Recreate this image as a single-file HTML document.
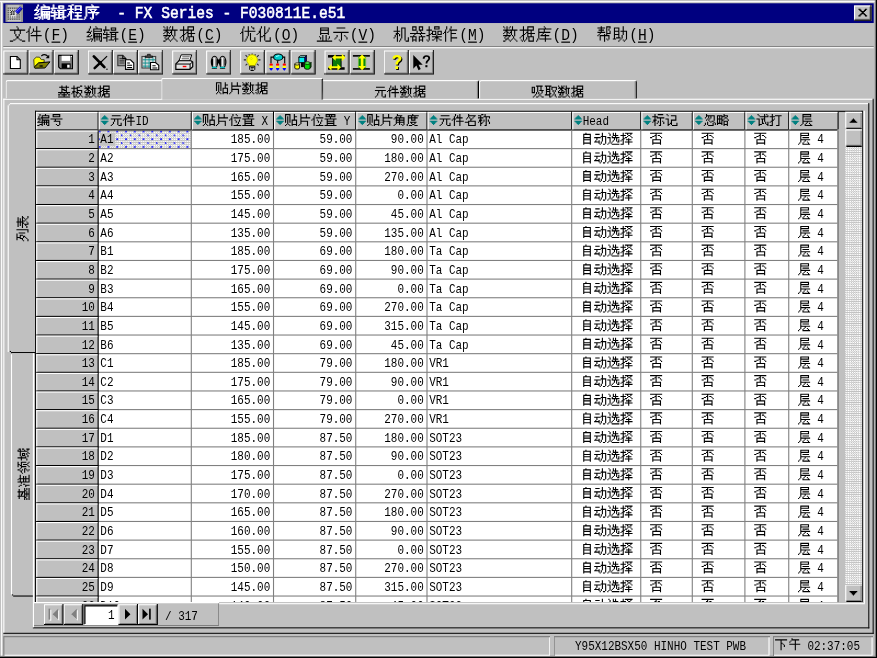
<!DOCTYPE html>
<html lang="zh"><head><meta charset="utf-8"><title>编辑程序 - FX Series - F030811E.e51</title>
<style>
html,body{margin:0;padding:0;background:#c0c0c0;overflow:hidden}
body{width:877px;height:658px;position:relative}
#stage{will-change:transform;position:absolute;left:0;top:0;width:800px;height:600px;transform:scale(1.096250,1.096667);transform-origin:0 0;overflow:hidden;
 font-family:"Liberation Mono",monospace;color:#000}
#stage div,#stage span,#stage svg{position:absolute;box-sizing:border-box}
#stage svg{overflow:visible}
.t12,.t15{white-space:pre;line-height:1;transform-origin:0 0;display:block}
.t12{font-size:10px;transform:translate(-0.5px,1.4px) scaleY(1.2)}
.t15{font-size:13.3333px;transform:translateY(1.8px) scaleY(1.1)}
.b{font-weight:normal;-webkit-text-stroke:0.45px currentColor}
.cj{display:block;width:0;height:0}
.cj svg{left:0;top:0}
.sr{width:1px;height:1px;overflow:hidden;clip:rect(0 0 0 0);clip-path:inset(50%);white-space:nowrap;font-size:1px;color:transparent}
u{text-decoration:underline;text-underline-offset:1px}
.tbb{background:#c0c0c0;box-shadow:inset -1px -1px 0 #202020,inset 1px 1px 0 #fff,inset -2px -2px 0 #808080}
.sbtn{background:#c0c0c0;box-shadow:inset 1px 1px 0 #fff,inset 0 -1px 0 #000,inset -1px -2px 0 #808080}
.nbtn{background:#c0c0c0;box-shadow:inset -1px -1px 0 #000,inset 1px 1px 0 #fff,inset -2px -2px 0 #808080}
.tab{background:#c0c0c0;border-top:1px solid #fff;border-left:1px solid #fff;border-right:1px solid #000;border-radius:2px 2px 0 0;box-shadow:inset -1px 0 0 #808080}
.tab.sel{}
.selcell{background-color:#c0c0c0;background-image:radial-gradient(circle at 1px 1px,#2828ff 0.7px,transparent 1px),radial-gradient(circle at 5px 4.5px,#2828ff 0.7px,transparent 1px),repeating-conic-gradient(#fff 0 25%,#c0c0c0 0 50%);background-size:8px 7px,8px 7px,2px 2px}
</style></head>
<body><div id="stage">
<svg width="0" height="0" style="left:0;top:0"><defs><path id="g157f16" d="M3 0h1v1h-1zM8 0h1v1h-1zM3 1h1v1h-1zM9 1h1v1h-1zM2 2h1v1h-1zM6 2h8v1h-8zM2 3h1v1h-1zM6 3h1v1h-1zM13 3h1v1h-1zM1 4h1v1h-1zM4 4h1v1h-1zM6 4h8v1h-8zM0 5h4v1h-4zM6 5h1v1h-1zM3 6h1v1h-1zM6 6h8v1h-8zM2 7h1v1h-1zM6 7h2v1h-2zM9 7h1v1h-1zM11 7h1v1h-1zM13 7h1v1h-1zM1 8h1v1h-1zM4 8h1v1h-1zM6 8h2v1h-2zM9 8h1v1h-1zM11 8h1v1h-1zM13 8h1v1h-1zM0 9h4v1h-4zM6 9h8v1h-8zM6 10h2v1h-2zM9 10h1v1h-1zM11 10h1v1h-1zM13 10h1v1h-1zM3 11h3v1h-3zM7 11h1v1h-1zM9 11h1v1h-1zM11 11h1v1h-1zM13 11h1v1h-1zM0 12h3v1h-3zM5 12h1v1h-1zM7 12h1v1h-1zM9 12h1v1h-1zM11 12h1v1h-1zM13 12h1v1h-1zM4 13h1v1h-1zM7 13h1v1h-1zM12 13h2v1h-2z"/><path id="g158f91" d="M2 0h1v1h-1zM2 1h1v1h-1zM7 1h5v1h-5zM2 2h1v1h-1zM7 2h1v1h-1zM11 2h1v1h-1zM0 3h6v1h-6zM7 3h5v1h-5zM1 4h1v1h-1zM1 5h1v1h-1zM3 5h1v1h-1zM6 5h8v1h-8zM0 6h1v1h-1zM3 6h1v1h-1zM7 6h1v1h-1zM11 6h1v1h-1zM0 7h6v1h-6zM7 7h5v1h-5zM3 8h1v1h-1zM7 8h1v1h-1zM11 8h1v1h-1zM3 9h3v1h-3zM7 9h5v1h-5zM0 10h4v1h-4zM7 10h1v1h-1zM11 10h1v1h-1zM3 11h1v1h-1zM7 11h1v1h-1zM10 11h4v1h-4zM3 12h1v1h-1zM5 12h5v1h-5zM11 12h1v1h-1zM3 13h1v1h-1zM11 13h1v1h-1z"/><path id="g157a0b" d="M4 0h2v1h-2zM1 1h3v1h-3zM7 1h6v1h-6zM3 2h1v1h-1zM7 2h1v1h-1zM12 2h1v1h-1zM3 3h1v1h-1zM7 3h1v1h-1zM12 3h1v1h-1zM0 4h6v1h-6zM7 4h6v1h-6zM3 5h1v1h-1zM7 5h1v1h-1zM12 5h1v1h-1zM2 6h3v1h-3zM2 7h2v1h-2zM5 7h1v1h-1zM7 7h6v1h-6zM1 8h1v1h-1zM3 8h1v1h-1zM9 8h1v1h-1zM1 9h1v1h-1zM3 9h1v1h-1zM9 9h1v1h-1zM0 10h1v1h-1zM3 10h1v1h-1zM7 10h6v1h-6zM3 11h1v1h-1zM9 11h1v1h-1zM3 12h1v1h-1zM9 12h1v1h-1zM3 13h1v1h-1zM5 13h9v1h-9z"/><path id="g155e8f" d="M7 0h1v1h-1zM8 1h1v1h-1zM2 2h12v1h-12zM2 3h1v1h-1zM2 4h1v1h-1zM4 4h8v1h-8zM2 5h1v1h-1zM6 5h1v1h-1zM10 5h1v1h-1zM2 6h1v1h-1zM7 6h1v1h-1zM9 6h1v1h-1zM2 7h1v1h-1zM4 7h10v1h-10zM2 8h1v1h-1zM8 8h1v1h-1zM12 8h1v1h-1zM2 9h1v1h-1zM8 9h1v1h-1zM11 9h1v1h-1zM2 10h1v1h-1zM8 10h1v1h-1zM1 11h1v1h-1zM8 11h1v1h-1zM1 12h1v1h-1zM6 12h1v1h-1zM8 12h1v1h-1zM0 13h1v1h-1zM7 13h1v1h-1z"/><path id="g156587" d="M6 0h1v1h-1zM7 1h1v1h-1zM7 2h1v1h-1zM0 3h14v1h-14zM4 4h1v1h-1zM9 4h1v1h-1zM4 5h1v1h-1zM9 5h1v1h-1zM4 6h1v1h-1zM9 6h1v1h-1zM5 7h1v1h-1zM8 7h1v1h-1zM5 8h1v1h-1zM8 8h1v1h-1zM6 9h2v1h-2zM6 10h2v1h-2zM5 11h1v1h-1zM8 11h1v1h-1zM3 12h2v1h-2zM9 12h2v1h-2zM0 13h3v1h-3zM11 13h3v1h-3z"/><path id="g154ef6" d="M3 0h1v1h-1zM9 0h1v1h-1zM3 1h1v1h-1zM9 1h1v1h-1zM2 2h1v1h-1zM6 2h1v1h-1zM9 2h1v1h-1zM2 3h1v1h-1zM6 3h1v1h-1zM9 3h1v1h-1zM1 4h2v1h-2zM6 4h7v1h-7zM0 5h1v1h-1zM2 5h1v1h-1zM5 5h1v1h-1zM9 5h1v1h-1zM2 6h1v1h-1zM4 6h1v1h-1zM9 6h1v1h-1zM2 7h1v1h-1zM9 7h1v1h-1zM2 8h1v1h-1zM4 8h10v1h-10zM2 9h1v1h-1zM9 9h1v1h-1zM2 10h1v1h-1zM9 10h1v1h-1zM2 11h1v1h-1zM9 11h1v1h-1zM2 12h1v1h-1zM9 12h1v1h-1zM2 13h1v1h-1zM9 13h1v1h-1z"/><path id="g156570" d="M0 0h1v1h-1zM3 0h1v1h-1zM6 0h1v1h-1zM8 0h1v1h-1zM1 1h1v1h-1zM3 1h1v1h-1zM5 1h1v1h-1zM8 1h1v1h-1zM3 2h1v1h-1zM8 2h1v1h-1zM0 3h13v1h-13zM2 4h2v1h-2zM7 4h1v1h-1zM10 4h1v1h-1zM1 5h1v1h-1zM3 5h2v1h-2zM6 5h2v1h-2zM10 5h1v1h-1zM0 6h1v1h-1zM3 6h1v1h-1zM5 6h1v1h-1zM7 6h1v1h-1zM10 6h1v1h-1zM3 7h1v1h-1zM7 7h1v1h-1zM10 7h1v1h-1zM0 8h7v1h-7zM8 8h1v1h-1zM10 8h1v1h-1zM2 9h1v1h-1zM5 9h1v1h-1zM9 9h1v1h-1zM1 10h1v1h-1zM4 10h1v1h-1zM9 10h1v1h-1zM2 11h3v1h-3zM8 11h1v1h-1zM10 11h1v1h-1zM2 12h1v1h-1zM5 12h1v1h-1zM7 12h1v1h-1zM11 12h1v1h-1zM0 13h2v1h-2zM6 13h1v1h-1zM12 13h1v1h-1z"/><path id="g15636e" d="M3 0h1v1h-1zM7 0h6v1h-6zM3 1h1v1h-1zM7 1h1v1h-1zM12 1h1v1h-1zM3 2h1v1h-1zM7 2h1v1h-1zM12 2h1v1h-1zM0 3h13v1h-13zM3 4h1v1h-1zM7 4h1v1h-1zM10 4h1v1h-1zM3 5h1v1h-1zM6 5h2v1h-2zM10 5h1v1h-1zM3 6h1v1h-1zM5 6h1v1h-1zM7 6h7v1h-7zM3 7h2v1h-2zM7 7h1v1h-1zM10 7h1v1h-1zM2 8h2v1h-2zM7 8h1v1h-1zM10 8h1v1h-1zM1 9h1v1h-1zM3 9h1v1h-1zM7 9h6v1h-6zM0 10h1v1h-1zM3 10h1v1h-1zM6 10h1v1h-1zM8 10h1v1h-1zM12 10h1v1h-1zM3 11h1v1h-1zM6 11h1v1h-1zM8 11h1v1h-1zM12 11h1v1h-1zM1 12h1v1h-1zM3 12h1v1h-1zM5 12h1v1h-1zM8 12h1v1h-1zM12 12h1v1h-1zM2 13h1v1h-1zM4 13h1v1h-1zM8 13h5v1h-5z"/><path id="g154f18" d="M3 0h1v1h-1zM7 0h1v1h-1zM10 0h1v1h-1zM3 1h1v1h-1zM7 1h1v1h-1zM11 1h2v1h-2zM2 2h1v1h-1zM7 2h1v1h-1zM12 2h1v1h-1zM2 3h1v1h-1zM7 3h1v1h-1zM2 4h1v1h-1zM4 4h10v1h-10zM1 5h2v1h-2zM7 5h1v1h-1zM0 6h1v1h-1zM2 6h1v1h-1zM7 6h1v1h-1zM9 6h1v1h-1zM2 7h1v1h-1zM7 7h1v1h-1zM9 7h1v1h-1zM2 8h1v1h-1zM7 8h1v1h-1zM9 8h1v1h-1zM2 9h1v1h-1zM6 9h1v1h-1zM9 9h1v1h-1zM2 10h1v1h-1zM6 10h1v1h-1zM9 10h1v1h-1zM13 10h1v1h-1zM2 11h1v1h-1zM5 11h1v1h-1zM9 11h1v1h-1zM13 11h1v1h-1zM2 12h1v1h-1zM5 12h1v1h-1zM9 12h1v1h-1zM13 12h1v1h-1zM2 13h1v1h-1zM4 13h1v1h-1zM10 13h4v1h-4z"/><path id="g155316" d="M4 0h1v1h-1zM7 0h1v1h-1zM4 1h1v1h-1zM7 1h1v1h-1zM11 1h1v1h-1zM3 2h1v1h-1zM7 2h1v1h-1zM11 2h1v1h-1zM3 3h1v1h-1zM7 3h1v1h-1zM10 3h1v1h-1zM2 4h2v1h-2zM7 4h1v1h-1zM10 4h1v1h-1zM2 5h2v1h-2zM7 5h1v1h-1zM9 5h1v1h-1zM1 6h1v1h-1zM3 6h1v1h-1zM7 6h2v1h-2zM0 7h1v1h-1zM3 7h1v1h-1zM7 7h1v1h-1zM3 8h1v1h-1zM6 8h2v1h-2zM3 9h3v1h-3zM7 9h1v1h-1zM3 10h1v1h-1zM7 10h1v1h-1zM12 10h1v1h-1zM3 11h1v1h-1zM7 11h1v1h-1zM12 11h1v1h-1zM3 12h1v1h-1zM7 12h1v1h-1zM12 12h1v1h-1zM3 13h1v1h-1zM8 13h5v1h-5z"/><path id="g15663e" d="M3 1h8v1h-8zM3 2h1v1h-1zM10 2h1v1h-1zM3 3h8v1h-8zM3 4h1v1h-1zM10 4h1v1h-1zM3 5h1v1h-1zM10 5h1v1h-1zM3 6h8v1h-8zM3 7h1v1h-1zM10 7h1v1h-1zM5 8h1v1h-1zM8 8h1v1h-1zM2 9h1v1h-1zM5 9h1v1h-1zM8 9h1v1h-1zM11 9h1v1h-1zM3 10h1v1h-1zM5 10h1v1h-1zM8 10h1v1h-1zM11 10h1v1h-1zM3 11h1v1h-1zM5 11h1v1h-1zM8 11h1v1h-1zM10 11h1v1h-1zM5 12h1v1h-1zM8 12h1v1h-1zM0 13h14v1h-14z"/><path id="g15793a" d="M3 1h8v1h-8zM0 5h14v1h-14zM7 6h1v1h-1zM7 7h1v1h-1zM3 8h1v1h-1zM7 8h1v1h-1zM10 8h1v1h-1zM3 9h1v1h-1zM7 9h1v1h-1zM11 9h1v1h-1zM2 10h1v1h-1zM7 10h1v1h-1zM12 10h1v1h-1zM1 11h1v1h-1zM7 11h1v1h-1zM12 11h1v1h-1zM5 12h1v1h-1zM7 12h1v1h-1zM6 13h1v1h-1z"/><path id="g15673a" d="M3 0h1v1h-1zM3 1h1v1h-1zM7 1h4v1h-4zM3 2h1v1h-1zM7 2h1v1h-1zM10 2h1v1h-1zM3 3h1v1h-1zM7 3h1v1h-1zM10 3h1v1h-1zM0 4h6v1h-6zM7 4h1v1h-1zM10 4h1v1h-1zM3 5h1v1h-1zM7 5h1v1h-1zM10 5h1v1h-1zM2 6h3v1h-3zM7 6h1v1h-1zM10 6h1v1h-1zM2 7h2v1h-2zM5 7h1v1h-1zM7 7h1v1h-1zM10 7h1v1h-1zM1 8h1v1h-1zM3 8h1v1h-1zM5 8h1v1h-1zM7 8h1v1h-1zM10 8h1v1h-1zM1 9h1v1h-1zM3 9h1v1h-1zM7 9h1v1h-1zM10 9h1v1h-1zM0 10h1v1h-1zM3 10h1v1h-1zM7 10h1v1h-1zM10 10h1v1h-1zM13 10h1v1h-1zM3 11h1v1h-1zM6 11h1v1h-1zM10 11h1v1h-1zM13 11h1v1h-1zM3 12h1v1h-1zM6 12h1v1h-1zM10 12h1v1h-1zM13 12h1v1h-1zM3 13h1v1h-1zM5 13h1v1h-1zM11 13h3v1h-3z"/><path id="g155668" d="M2 0h4v1h-4zM8 0h4v1h-4zM2 1h1v1h-1zM5 1h1v1h-1zM8 1h1v1h-1zM11 1h1v1h-1zM2 2h1v1h-1zM5 2h1v1h-1zM8 2h1v1h-1zM11 2h1v1h-1zM2 3h4v1h-4zM8 3h4v1h-4zM6 4h1v1h-1zM9 4h1v1h-1zM6 5h1v1h-1zM10 5h1v1h-1zM0 6h14v1h-14zM4 7h1v1h-1zM9 7h1v1h-1zM3 8h1v1h-1zM10 8h1v1h-1zM0 9h6v1h-6zM8 9h6v1h-6zM2 10h1v1h-1zM5 10h1v1h-1zM8 10h1v1h-1zM11 10h1v1h-1zM2 11h1v1h-1zM5 11h1v1h-1zM8 11h1v1h-1zM11 11h1v1h-1zM2 12h4v1h-4zM8 12h4v1h-4zM2 13h1v1h-1zM5 13h1v1h-1zM8 13h1v1h-1zM11 13h1v1h-1z"/><path id="g1564cd" d="M2 0h1v1h-1zM7 0h5v1h-5zM2 1h1v1h-1zM7 1h1v1h-1zM11 1h1v1h-1zM2 2h1v1h-1zM7 2h5v1h-5zM0 3h5v1h-5zM2 4h1v1h-1zM5 4h4v1h-4zM10 4h4v1h-4zM2 5h1v1h-1zM5 5h1v1h-1zM8 5h1v1h-1zM10 5h1v1h-1zM13 5h1v1h-1zM2 6h1v1h-1zM4 6h2v1h-2zM8 6h1v1h-1zM10 6h1v1h-1zM13 6h1v1h-1zM2 7h2v1h-2zM5 7h4v1h-4zM10 7h4v1h-4zM0 8h3v1h-3zM9 8h1v1h-1zM2 9h1v1h-1zM5 9h9v1h-9zM2 10h1v1h-1zM8 10h3v1h-3zM2 11h1v1h-1zM7 11h1v1h-1zM9 11h1v1h-1zM11 11h1v1h-1zM0 12h1v1h-1zM2 12h1v1h-1zM5 12h2v1h-2zM9 12h1v1h-1zM12 12h2v1h-2zM1 13h1v1h-1zM9 13h1v1h-1z"/><path id="g154f5c" d="M3 0h1v1h-1zM7 0h1v1h-1zM3 1h1v1h-1zM7 1h1v1h-1zM3 2h1v1h-1zM6 2h1v1h-1zM2 3h1v1h-1zM6 3h7v1h-7zM2 4h1v1h-1zM5 4h1v1h-1zM7 4h1v1h-1zM1 5h2v1h-2zM4 5h1v1h-1zM7 5h1v1h-1zM0 6h1v1h-1zM2 6h1v1h-1zM7 6h5v1h-5zM2 7h1v1h-1zM7 7h1v1h-1zM2 8h1v1h-1zM7 8h1v1h-1zM2 9h1v1h-1zM7 9h1v1h-1zM2 10h1v1h-1zM7 10h6v1h-6zM2 11h1v1h-1zM7 11h1v1h-1zM2 12h1v1h-1zM7 12h1v1h-1zM2 13h1v1h-1zM7 13h1v1h-1z"/><path id="g155e93" d="M7 0h1v1h-1zM8 1h1v1h-1zM2 2h12v1h-12zM2 3h1v1h-1zM7 3h1v1h-1zM2 4h1v1h-1zM7 4h1v1h-1zM2 5h11v1h-11zM2 6h1v1h-1zM6 6h1v1h-1zM2 7h1v1h-1zM5 7h1v1h-1zM8 7h1v1h-1zM2 8h1v1h-1zM4 8h8v1h-8zM2 9h1v1h-1zM8 9h1v1h-1zM2 10h1v1h-1zM8 10h1v1h-1zM1 11h1v1h-1zM3 11h11v1h-11zM1 12h1v1h-1zM8 12h1v1h-1zM0 13h1v1h-1zM8 13h1v1h-1z"/><path id="g155e2e" d="M4 0h1v1h-1zM9 0h4v1h-4zM1 1h7v1h-7zM9 1h1v1h-1zM12 1h1v1h-1zM4 2h1v1h-1zM9 2h1v1h-1zM11 2h1v1h-1zM2 3h5v1h-5zM9 3h1v1h-1zM11 3h1v1h-1zM4 4h1v1h-1zM9 4h1v1h-1zM12 4h1v1h-1zM1 5h7v1h-7zM9 5h1v1h-1zM12 5h1v1h-1zM3 6h1v1h-1zM9 6h4v1h-4zM2 7h1v1h-1zM7 7h1v1h-1zM9 7h1v1h-1zM1 8h1v1h-1zM3 8h9v1h-9zM3 9h1v1h-1zM7 9h1v1h-1zM11 9h1v1h-1zM3 10h1v1h-1zM7 10h1v1h-1zM11 10h1v1h-1zM3 11h1v1h-1zM7 11h1v1h-1zM9 11h1v1h-1zM11 11h1v1h-1zM3 12h1v1h-1zM7 12h1v1h-1zM10 12h1v1h-1zM7 13h1v1h-1z"/><path id="g1552a9" d="M9 0h1v1h-1zM1 1h5v1h-5zM9 1h1v1h-1zM1 2h1v1h-1zM5 2h1v1h-1zM9 2h1v1h-1zM1 3h1v1h-1zM5 3h1v1h-1zM9 3h1v1h-1zM1 4h5v1h-5zM7 4h6v1h-6zM1 5h1v1h-1zM5 5h1v1h-1zM9 5h1v1h-1zM12 5h1v1h-1zM1 6h1v1h-1zM5 6h1v1h-1zM9 6h1v1h-1zM12 6h1v1h-1zM1 7h5v1h-5zM9 7h1v1h-1zM12 7h1v1h-1zM1 8h1v1h-1zM5 8h1v1h-1zM8 8h1v1h-1zM12 8h1v1h-1zM1 9h1v1h-1zM5 9h1v1h-1zM8 9h1v1h-1zM12 9h1v1h-1zM1 10h1v1h-1zM3 10h4v1h-4zM8 10h1v1h-1zM12 10h1v1h-1zM0 11h3v1h-3zM7 11h1v1h-1zM12 11h1v1h-1zM6 12h1v1h-1zM9 12h1v1h-1zM11 12h1v1h-1zM5 13h1v1h-1zM10 13h1v1h-1z"/><path id="g1257fa" d="M3 0h1v1h-1zM7 0h1v1h-1zM1 1h9v1h-9zM3 2h1v1h-1zM7 2h1v1h-1zM3 3h3v1h-3zM7 3h1v1h-1zM3 4h1v1h-1zM5 4h3v1h-3zM3 5h1v1h-1zM7 5h1v1h-1zM0 6h11v1h-11zM2 7h1v1h-1zM5 7h1v1h-1zM8 7h1v1h-1zM0 8h2v1h-2zM3 8h5v1h-5zM9 8h2v1h-2zM5 9h1v1h-1zM0 10h11v1h-11z"/><path id="g12677f" d="M2 0h1v1h-1zM8 0h2v1h-2zM2 1h1v1h-1zM5 1h3v1h-3zM0 2h6v1h-6zM2 3h1v1h-1zM5 3h1v1h-1zM2 4h1v1h-1zM5 4h5v1h-5zM1 5h3v1h-3zM5 5h1v1h-1zM9 5h1v1h-1zM1 6h2v1h-2zM4 6h3v1h-3zM9 6h1v1h-1zM0 7h1v1h-1zM2 7h1v1h-1zM5 7h1v1h-1zM7 7h2v1h-2zM2 8h1v1h-1zM4 8h1v1h-1zM8 8h1v1h-1zM2 9h1v1h-1zM4 9h1v1h-1zM7 9h1v1h-1zM9 9h1v1h-1zM2 10h2v1h-2zM5 10h2v1h-2zM10 10h1v1h-1z"/><path id="g126570" d="M0 0h1v1h-1zM3 0h1v1h-1zM5 0h1v1h-1zM7 0h1v1h-1zM1 1h1v1h-1zM3 1h2v1h-2zM7 1h1v1h-1zM0 2h6v1h-6zM7 2h4v1h-4zM2 3h2v1h-2zM6 3h2v1h-2zM9 3h1v1h-1zM1 4h1v1h-1zM3 4h2v1h-2zM7 4h1v1h-1zM9 4h1v1h-1zM0 5h1v1h-1zM3 5h1v1h-1zM5 5h1v1h-1zM7 5h1v1h-1zM9 5h1v1h-1zM0 6h6v1h-6zM7 6h1v1h-1zM9 6h1v1h-1zM2 7h1v1h-1zM4 7h1v1h-1zM7 7h1v1h-1zM9 7h1v1h-1zM1 8h2v1h-2zM4 8h1v1h-1zM8 8h1v1h-1zM3 9h1v1h-1zM7 9h1v1h-1zM9 9h1v1h-1zM0 10h3v1h-3zM4 10h3v1h-3zM10 10h1v1h-1z"/><path id="g12636e" d="M2 0h1v1h-1zM5 0h6v1h-6zM2 1h1v1h-1zM5 1h1v1h-1zM10 1h1v1h-1zM0 2h6v1h-6zM10 2h1v1h-1zM2 3h1v1h-1zM5 3h6v1h-6zM2 4h1v1h-1zM4 4h2v1h-2zM8 4h1v1h-1zM2 5h2v1h-2zM5 5h6v1h-6zM1 6h2v1h-2zM5 6h1v1h-1zM8 6h1v1h-1zM0 7h1v1h-1zM2 7h1v1h-1zM5 7h6v1h-6zM2 8h1v1h-1zM4 8h3v1h-3zM10 8h1v1h-1zM0 9h1v1h-1zM2 9h1v1h-1zM4 9h1v1h-1zM6 9h1v1h-1zM10 9h1v1h-1zM1 10h1v1h-1zM3 10h1v1h-1zM6 10h5v1h-5z"/><path id="g125143" d="M2 1h8v1h-8zM1 4h10v1h-10zM4 5h1v1h-1zM7 5h1v1h-1zM4 6h1v1h-1zM7 6h1v1h-1zM3 7h1v1h-1zM7 7h1v1h-1zM3 8h1v1h-1zM7 8h1v1h-1zM10 8h1v1h-1zM2 9h1v1h-1zM7 9h1v1h-1zM10 9h1v1h-1zM1 10h1v1h-1zM8 10h3v1h-3z"/><path id="g124ef6" d="M3 0h1v1h-1zM7 0h1v1h-1zM3 1h1v1h-1zM5 1h1v1h-1zM7 1h1v1h-1zM2 2h1v1h-1zM5 2h1v1h-1zM7 2h1v1h-1zM2 3h1v1h-1zM4 3h6v1h-6zM1 4h3v1h-3zM7 4h1v1h-1zM0 5h1v1h-1zM2 5h1v1h-1zM7 5h1v1h-1zM2 6h1v1h-1zM4 6h7v1h-7zM2 7h1v1h-1zM7 7h1v1h-1zM2 8h1v1h-1zM7 8h1v1h-1zM2 9h1v1h-1zM7 9h1v1h-1zM2 10h1v1h-1zM7 10h1v1h-1z"/><path id="g125438" d="M4 0h6v1h-6zM0 1h3v1h-3zM5 1h1v1h-1zM8 1h1v1h-1zM0 2h1v1h-1zM2 2h1v1h-1zM5 2h1v1h-1zM8 2h1v1h-1zM0 3h1v1h-1zM2 3h1v1h-1zM5 3h1v1h-1zM8 3h1v1h-1zM0 4h1v1h-1zM2 4h1v1h-1zM5 4h1v1h-1zM7 4h4v1h-4zM0 5h1v1h-1zM2 5h1v1h-1zM5 5h1v1h-1zM9 5h1v1h-1zM0 6h3v1h-3zM4 6h1v1h-1zM6 6h1v1h-1zM9 6h1v1h-1zM4 7h1v1h-1zM6 7h1v1h-1zM8 7h1v1h-1zM3 8h1v1h-1zM7 8h1v1h-1zM2 9h1v1h-1zM6 9h1v1h-1zM8 9h1v1h-1zM1 10h1v1h-1zM4 10h2v1h-2zM9 10h2v1h-2z"/><path id="g1253d6" d="M0 0h6v1h-6zM1 1h1v1h-1zM4 1h1v1h-1zM6 1h5v1h-5zM1 2h1v1h-1zM4 2h1v1h-1zM6 2h1v1h-1zM10 2h1v1h-1zM1 3h4v1h-4zM6 3h1v1h-1zM10 3h1v1h-1zM1 4h1v1h-1zM4 4h1v1h-1zM7 4h1v1h-1zM9 4h1v1h-1zM1 5h4v1h-4zM7 5h1v1h-1zM9 5h1v1h-1zM1 6h1v1h-1zM4 6h1v1h-1zM8 6h1v1h-1zM1 7h1v1h-1zM4 7h2v1h-2zM8 7h1v1h-1zM0 8h5v1h-5zM7 8h1v1h-1zM9 8h1v1h-1zM4 9h1v1h-1zM6 9h1v1h-1zM9 9h1v1h-1zM4 10h2v1h-2zM10 10h1v1h-1z"/><path id="g128d34" d="M0 0h5v1h-5zM8 0h1v1h-1zM0 1h1v1h-1zM4 1h1v1h-1zM8 1h1v1h-1zM0 2h1v1h-1zM2 2h1v1h-1zM4 2h1v1h-1zM8 2h3v1h-3zM0 3h1v1h-1zM2 3h1v1h-1zM4 3h1v1h-1zM8 3h1v1h-1zM0 4h1v1h-1zM2 4h1v1h-1zM4 4h1v1h-1zM8 4h1v1h-1zM0 5h1v1h-1zM2 5h1v1h-1zM4 5h1v1h-1zM6 5h5v1h-5zM0 6h1v1h-1zM2 6h1v1h-1zM4 6h1v1h-1zM6 6h1v1h-1zM10 6h1v1h-1zM0 7h1v1h-1zM2 7h1v1h-1zM4 7h1v1h-1zM6 7h1v1h-1zM10 7h1v1h-1zM2 8h1v1h-1zM6 8h1v1h-1zM10 8h1v1h-1zM1 9h1v1h-1zM3 9h1v1h-1zM6 9h5v1h-5zM0 10h1v1h-1zM4 10h1v1h-1zM6 10h1v1h-1zM10 10h1v1h-1z"/><path id="g127247" d="M2 0h1v1h-1zM7 0h1v1h-1zM2 1h1v1h-1zM7 1h1v1h-1zM2 2h1v1h-1zM7 2h1v1h-1zM2 3h9v1h-9zM2 4h1v1h-1zM2 5h1v1h-1zM2 6h7v1h-7zM2 7h1v1h-1zM8 7h1v1h-1zM2 8h1v1h-1zM8 8h1v1h-1zM1 9h1v1h-1zM8 9h1v1h-1zM0 10h1v1h-1zM8 10h1v1h-1z"/><path id="g125217" d="M1 0h6v1h-6zM10 0h1v1h-1zM3 1h1v1h-1zM10 1h1v1h-1zM3 2h1v1h-1zM7 2h1v1h-1zM10 2h1v1h-1zM2 3h4v1h-4zM7 3h1v1h-1zM10 3h1v1h-1zM2 4h1v1h-1zM5 4h1v1h-1zM7 4h1v1h-1zM10 4h1v1h-1zM1 5h2v1h-2zM5 5h1v1h-1zM7 5h1v1h-1zM10 5h1v1h-1zM0 6h1v1h-1zM3 6h2v1h-2zM7 6h1v1h-1zM10 6h1v1h-1zM4 7h1v1h-1zM7 7h1v1h-1zM10 7h1v1h-1zM3 8h1v1h-1zM10 8h1v1h-1zM2 9h1v1h-1zM10 9h1v1h-1zM0 10h2v1h-2zM8 10h3v1h-3z"/><path id="g128868" d="M5 0h1v1h-1zM1 1h9v1h-9zM5 2h1v1h-1zM2 3h7v1h-7zM5 4h1v1h-1zM0 5h11v1h-11zM4 6h1v1h-1zM6 6h1v1h-1zM9 6h1v1h-1zM3 7h1v1h-1zM6 7h1v1h-1zM8 7h1v1h-1zM2 8h2v1h-2zM7 8h1v1h-1zM0 9h2v1h-2zM3 9h1v1h-1zM5 9h1v1h-1zM8 9h1v1h-1zM3 10h2v1h-2zM9 10h2v1h-2z"/><path id="g1251c6" d="M4 0h1v1h-1zM6 0h1v1h-1zM0 1h1v1h-1zM4 1h1v1h-1zM7 1h1v1h-1zM1 2h1v1h-1zM4 2h7v1h-7zM1 3h1v1h-1zM3 3h2v1h-2zM7 3h1v1h-1zM4 4h1v1h-1zM7 4h1v1h-1zM2 5h1v1h-1zM4 5h6v1h-6zM2 6h1v1h-1zM4 6h1v1h-1zM7 6h1v1h-1zM0 7h2v1h-2zM4 7h6v1h-6zM1 8h1v1h-1zM4 8h1v1h-1zM7 8h1v1h-1zM1 9h1v1h-1zM4 9h1v1h-1zM7 9h1v1h-1zM1 10h1v1h-1zM4 10h7v1h-7z"/><path id="g129886" d="M3 0h1v1h-1zM6 0h5v1h-5zM3 1h1v1h-1zM8 1h1v1h-1zM2 2h1v1h-1zM4 2h1v1h-1zM7 2h1v1h-1zM1 3h2v1h-2zM5 3h6v1h-6zM0 4h1v1h-1zM3 4h1v1h-1zM6 4h1v1h-1zM10 4h1v1h-1zM6 5h1v1h-1zM8 5h1v1h-1zM10 5h1v1h-1zM1 6h4v1h-4zM6 6h1v1h-1zM8 6h1v1h-1zM10 6h1v1h-1zM4 7h1v1h-1zM6 7h1v1h-1zM8 7h1v1h-1zM10 7h1v1h-1zM3 8h1v1h-1zM8 8h1v1h-1zM2 9h1v1h-1zM7 9h1v1h-1zM9 9h1v1h-1zM3 10h1v1h-1zM6 10h1v1h-1zM10 10h1v1h-1z"/><path id="g1257df" d="M2 0h1v1h-1zM8 0h2v1h-2zM2 1h1v1h-1zM8 1h1v1h-1zM10 1h1v1h-1zM2 2h1v1h-1zM4 2h7v1h-7zM0 3h4v1h-4zM8 3h1v1h-1zM2 4h1v1h-1zM4 4h3v1h-3zM8 4h1v1h-1zM10 4h1v1h-1zM2 5h1v1h-1zM4 5h1v1h-1zM6 5h1v1h-1zM8 5h1v1h-1zM10 5h1v1h-1zM2 6h1v1h-1zM4 6h3v1h-3zM8 6h2v1h-2zM2 7h2v1h-2zM8 7h1v1h-1zM0 8h2v1h-2zM5 8h2v1h-2zM8 8h1v1h-1zM10 8h1v1h-1zM3 9h2v1h-2zM7 9h1v1h-1zM9 9h2v1h-2zM6 10h1v1h-1zM10 10h1v1h-1z"/><path id="g127f16" d="M2 0h1v1h-1zM7 0h1v1h-1zM2 1h1v1h-1zM4 1h7v1h-7zM1 2h1v1h-1zM4 2h1v1h-1zM10 2h1v1h-1zM1 3h1v1h-1zM3 3h8v1h-8zM0 4h3v1h-3zM4 4h1v1h-1zM2 5h1v1h-1zM4 5h7v1h-7zM1 6h1v1h-1zM4 6h1v1h-1zM6 6h1v1h-1zM8 6h1v1h-1zM10 6h1v1h-1zM0 7h11v1h-11zM4 8h1v1h-1zM6 8h1v1h-1zM8 8h1v1h-1zM10 8h1v1h-1zM2 9h3v1h-3zM6 9h1v1h-1zM8 9h1v1h-1zM10 9h1v1h-1zM0 10h2v1h-2zM4 10h1v1h-1zM9 10h2v1h-2z"/><path id="g1253f7" d="M2 0h7v1h-7zM2 1h1v1h-1zM8 1h1v1h-1zM2 2h7v1h-7zM0 4h11v1h-11zM4 5h1v1h-1zM3 6h6v1h-6zM8 7h1v1h-1zM8 8h1v1h-1zM5 9h1v1h-1zM8 9h1v1h-1zM6 10h2v1h-2z"/><path id="g124f4d" d="M3 0h1v1h-1zM6 0h1v1h-1zM3 1h1v1h-1zM7 1h1v1h-1zM2 2h1v1h-1zM2 3h1v1h-1zM4 3h7v1h-7zM1 4h2v1h-2zM0 5h1v1h-1zM2 5h1v1h-1zM5 5h1v1h-1zM9 5h1v1h-1zM2 6h1v1h-1zM6 6h1v1h-1zM9 6h1v1h-1zM2 7h1v1h-1zM6 7h1v1h-1zM8 7h1v1h-1zM2 8h1v1h-1zM8 8h1v1h-1zM2 9h1v1h-1zM7 9h1v1h-1zM2 10h1v1h-1zM4 10h7v1h-7z"/><path id="g127f6e" d="M1 0h9v1h-9zM1 1h1v1h-1zM4 1h1v1h-1zM6 1h1v1h-1zM9 1h1v1h-1zM1 2h9v1h-9zM5 3h1v1h-1zM0 4h11v1h-11zM2 5h1v1h-1zM8 5h1v1h-1zM2 6h7v1h-7zM2 7h1v1h-1zM8 7h1v1h-1zM2 8h7v1h-7zM2 9h1v1h-1zM8 9h1v1h-1zM0 10h11v1h-11z"/><path id="g1289d2" d="M3 0h1v1h-1zM3 1h5v1h-5zM2 2h1v1h-1zM6 2h1v1h-1zM1 3h9v1h-9zM0 4h1v1h-1zM2 4h1v1h-1zM5 4h1v1h-1zM9 4h1v1h-1zM2 5h8v1h-8zM2 6h1v1h-1zM5 6h1v1h-1zM9 6h1v1h-1zM2 7h8v1h-8zM2 8h1v1h-1zM5 8h1v1h-1zM9 8h1v1h-1zM1 9h1v1h-1zM5 9h1v1h-1zM7 9h1v1h-1zM9 9h1v1h-1zM0 10h1v1h-1zM8 10h1v1h-1z"/><path id="g125ea6" d="M5 0h1v1h-1zM1 1h10v1h-10zM1 2h1v1h-1zM4 2h1v1h-1zM7 2h1v1h-1zM1 3h9v1h-9zM1 4h1v1h-1zM4 4h1v1h-1zM7 4h1v1h-1zM1 5h1v1h-1zM4 5h4v1h-4zM1 6h1v1h-1zM1 7h1v1h-1zM3 7h6v1h-6zM1 8h1v1h-1zM4 8h1v1h-1zM7 8h1v1h-1zM0 9h1v1h-1zM5 9h2v1h-2zM0 10h1v1h-1zM2 10h3v1h-3zM7 10h3v1h-3z"/><path id="g12540d" d="M3 0h1v1h-1zM3 1h7v1h-7zM3 2h1v1h-1zM8 2h1v1h-1zM2 3h1v1h-1zM4 3h1v1h-1zM7 3h1v1h-1zM1 4h1v1h-1zM5 4h2v1h-2zM5 5h1v1h-1zM3 6h7v1h-7zM0 7h4v1h-4zM9 7h1v1h-1zM3 8h1v1h-1zM9 8h1v1h-1zM3 9h1v1h-1zM9 9h1v1h-1zM3 10h7v1h-7z"/><path id="g1279f0" d="M3 0h2v1h-2zM6 0h1v1h-1zM0 1h3v1h-3zM6 1h1v1h-1zM2 2h1v1h-1zM5 2h6v1h-6zM0 3h5v1h-5zM7 3h1v1h-1zM10 3h1v1h-1zM2 4h1v1h-1zM7 4h1v1h-1zM1 5h3v1h-3zM5 5h1v1h-1zM7 5h1v1h-1zM9 5h1v1h-1zM1 6h2v1h-2zM5 6h1v1h-1zM7 6h1v1h-1zM9 6h1v1h-1zM0 7h1v1h-1zM2 7h1v1h-1zM4 7h1v1h-1zM7 7h1v1h-1zM10 7h1v1h-1zM2 8h2v1h-2zM7 8h1v1h-1zM10 8h1v1h-1zM2 9h1v1h-1zM7 9h1v1h-1zM2 10h1v1h-1zM6 10h2v1h-2z"/><path id="g126807" d="M2 0h1v1h-1zM5 0h5v1h-5zM2 1h1v1h-1zM0 2h5v1h-5zM2 3h1v1h-1zM4 3h7v1h-7zM2 4h1v1h-1zM7 4h1v1h-1zM1 5h3v1h-3zM7 5h1v1h-1zM1 6h2v1h-2zM5 6h1v1h-1zM7 6h1v1h-1zM9 6h1v1h-1zM0 7h1v1h-1zM2 7h1v1h-1zM5 7h1v1h-1zM7 7h1v1h-1zM10 7h1v1h-1zM2 8h1v1h-1zM4 8h1v1h-1zM7 8h1v1h-1zM10 8h1v1h-1zM2 9h1v1h-1zM7 9h1v1h-1zM2 10h1v1h-1zM6 10h2v1h-2z"/><path id="g128bb0" d="M1 0h1v1h-1zM2 1h1v1h-1zM5 1h5v1h-5zM9 2h1v1h-1zM9 3h1v1h-1zM0 4h3v1h-3zM9 4h1v1h-1zM2 5h1v1h-1zM5 5h5v1h-5zM2 6h1v1h-1zM5 6h1v1h-1zM2 7h1v1h-1zM5 7h1v1h-1zM2 8h1v1h-1zM4 8h2v1h-2zM10 8h1v1h-1zM2 9h2v1h-2zM5 9h1v1h-1zM10 9h1v1h-1zM2 10h1v1h-1zM6 10h5v1h-5z"/><path id="g125ffd" d="M2 0h1v1h-1zM2 1h8v1h-8zM2 2h1v1h-1zM4 2h1v1h-1zM6 2h1v1h-1zM9 2h1v1h-1zM1 3h1v1h-1zM4 3h1v1h-1zM6 3h1v1h-1zM9 3h1v1h-1zM3 4h1v1h-1zM5 4h1v1h-1zM9 4h1v1h-1zM2 5h1v1h-1zM4 5h1v1h-1zM9 5h1v1h-1zM5 6h1v1h-1zM7 6h2v1h-2zM3 7h1v1h-1zM6 7h1v1h-1zM9 7h1v1h-1zM1 8h1v1h-1zM3 8h1v1h-1zM8 8h1v1h-1zM10 8h1v1h-1zM1 9h1v1h-1zM3 9h1v1h-1zM8 9h1v1h-1zM10 9h1v1h-1zM0 10h1v1h-1zM4 10h5v1h-5z"/><path id="g127565" d="M6 0h1v1h-1zM0 1h5v1h-5zM6 1h4v1h-4zM0 2h1v1h-1zM2 2h1v1h-1zM4 2h3v1h-3zM9 2h1v1h-1zM0 3h1v1h-1zM2 3h1v1h-1zM4 3h1v1h-1zM7 3h2v1h-2zM0 4h5v1h-5zM6 4h1v1h-1zM9 4h1v1h-1zM0 5h1v1h-1zM2 5h1v1h-1zM4 5h2v1h-2zM10 5h1v1h-1zM0 6h1v1h-1zM2 6h1v1h-1zM4 6h1v1h-1zM6 6h4v1h-4zM0 7h1v1h-1zM2 7h1v1h-1zM4 7h1v1h-1zM6 7h1v1h-1zM9 7h1v1h-1zM0 8h5v1h-5zM6 8h1v1h-1zM9 8h1v1h-1zM0 9h1v1h-1zM4 9h1v1h-1zM6 9h4v1h-4zM6 10h1v1h-1zM9 10h1v1h-1z"/><path id="g128bd5" d="M1 0h1v1h-1zM7 0h1v1h-1zM9 0h1v1h-1zM2 1h1v1h-1zM7 1h1v1h-1zM10 1h1v1h-1zM3 2h8v1h-8zM7 3h1v1h-1zM0 4h3v1h-3zM4 4h4v1h-4zM2 5h1v1h-1zM5 5h1v1h-1zM7 5h1v1h-1zM2 6h1v1h-1zM5 6h1v1h-1zM7 6h1v1h-1zM2 7h1v1h-1zM5 7h1v1h-1zM8 7h1v1h-1zM10 7h1v1h-1zM2 8h1v1h-1zM5 8h2v1h-2zM8 8h1v1h-1zM10 8h1v1h-1zM2 9h3v1h-3zM9 9h2v1h-2zM2 10h1v1h-1zM10 10h1v1h-1z"/><path id="g126253" d="M2 0h1v1h-1zM2 1h1v1h-1zM5 1h6v1h-6zM0 2h5v1h-5zM8 2h1v1h-1zM2 3h1v1h-1zM8 3h1v1h-1zM2 4h1v1h-1zM4 4h1v1h-1zM8 4h1v1h-1zM2 5h2v1h-2zM8 5h1v1h-1zM1 6h2v1h-2zM8 6h1v1h-1zM0 7h1v1h-1zM2 7h1v1h-1zM8 7h1v1h-1zM2 8h1v1h-1zM8 8h1v1h-1zM2 9h1v1h-1zM8 9h1v1h-1zM0 10h3v1h-3zM6 10h3v1h-3z"/><path id="g125c42" d="M2 0h8v1h-8zM2 1h1v1h-1zM9 1h1v1h-1zM2 2h8v1h-8zM2 3h1v1h-1zM2 4h1v1h-1zM4 4h6v1h-6zM2 5h1v1h-1zM2 6h9v1h-9zM2 7h1v1h-1zM6 7h1v1h-1zM2 8h1v1h-1zM5 8h1v1h-1zM8 8h1v1h-1zM1 9h1v1h-1zM4 9h1v1h-1zM9 9h1v1h-1zM0 10h1v1h-1zM4 10h7v1h-7z"/><path id="g1281ea" d="M4 0h1v1h-1zM2 1h7v1h-7zM2 2h1v1h-1zM8 2h1v1h-1zM2 3h1v1h-1zM8 3h1v1h-1zM2 4h7v1h-7zM2 5h1v1h-1zM8 5h1v1h-1zM2 6h7v1h-7zM2 7h1v1h-1zM8 7h1v1h-1zM2 8h1v1h-1zM8 8h1v1h-1zM2 9h7v1h-7zM2 10h1v1h-1zM8 10h1v1h-1z"/><path id="g1252a8" d="M7 0h1v1h-1zM1 1h4v1h-4zM7 1h1v1h-1zM7 2h1v1h-1zM6 3h5v1h-5zM0 4h6v1h-6zM7 4h1v1h-1zM10 4h1v1h-1zM2 5h1v1h-1zM7 5h1v1h-1zM10 5h1v1h-1zM2 6h1v1h-1zM7 6h1v1h-1zM10 6h1v1h-1zM1 7h1v1h-1zM4 7h1v1h-1zM7 7h1v1h-1zM10 7h1v1h-1zM0 8h5v1h-5zM6 8h1v1h-1zM10 8h1v1h-1zM4 9h1v1h-1zM6 9h1v1h-1zM10 9h1v1h-1zM5 10h1v1h-1zM8 10h2v1h-2z"/><path id="g129009" d="M1 0h1v1h-1zM5 0h1v1h-1zM7 0h1v1h-1zM2 1h1v1h-1zM5 1h1v1h-1zM7 1h1v1h-1zM2 2h1v1h-1zM5 2h5v1h-5zM4 3h1v1h-1zM7 3h1v1h-1zM0 4h3v1h-3zM4 4h7v1h-7zM2 5h1v1h-1zM6 5h1v1h-1zM8 5h1v1h-1zM2 6h1v1h-1zM6 6h1v1h-1zM8 6h1v1h-1zM10 6h1v1h-1zM2 7h1v1h-1zM5 7h1v1h-1zM8 7h1v1h-1zM10 7h1v1h-1zM2 8h1v1h-1zM4 8h1v1h-1zM9 8h2v1h-2zM1 9h1v1h-1zM3 9h1v1h-1zM0 10h1v1h-1zM4 10h7v1h-7z"/><path id="g1262e9" d="M2 0h1v1h-1zM4 0h7v1h-7zM2 1h1v1h-1zM6 1h1v1h-1zM9 1h1v1h-1zM0 2h5v1h-5zM7 2h2v1h-2zM2 3h1v1h-1zM6 3h1v1h-1zM9 3h1v1h-1zM2 4h1v1h-1zM4 4h2v1h-2zM10 4h1v1h-1zM2 5h2v1h-2zM7 5h1v1h-1zM1 6h2v1h-2zM5 6h5v1h-5zM0 7h1v1h-1zM2 7h1v1h-1zM7 7h1v1h-1zM2 8h1v1h-1zM4 8h7v1h-7zM2 9h1v1h-1zM7 9h1v1h-1zM0 10h3v1h-3zM7 10h1v1h-1z"/><path id="g125426" d="M0 0h11v1h-11zM5 1h1v1h-1zM4 2h2v1h-2zM7 2h2v1h-2zM2 3h2v1h-2zM5 3h1v1h-1zM9 3h1v1h-1zM0 4h2v1h-2zM5 4h1v1h-1zM10 4h1v1h-1zM5 5h1v1h-1zM2 6h8v1h-8zM2 7h1v1h-1zM9 7h1v1h-1zM2 8h1v1h-1zM9 8h1v1h-1zM2 9h8v1h-8zM2 10h1v1h-1zM9 10h1v1h-1z"/><path id="g124e0b" d="M0 1h11v1h-11zM5 2h1v1h-1zM5 3h1v1h-1zM5 4h2v1h-2zM5 5h1v1h-1zM7 5h1v1h-1zM5 6h1v1h-1zM8 6h1v1h-1zM5 7h1v1h-1zM8 7h1v1h-1zM5 8h1v1h-1zM5 9h1v1h-1zM5 10h1v1h-1z"/><path id="g125348" d="M3 0h1v1h-1zM3 1h7v1h-7zM2 2h1v1h-1zM6 2h1v1h-1zM1 3h1v1h-1zM6 3h1v1h-1zM6 4h1v1h-1zM1 5h10v1h-10zM6 6h1v1h-1zM6 7h1v1h-1zM6 8h1v1h-1zM6 9h1v1h-1zM6 10h1v1h-1z"/></defs></svg>
<div style="left:0px;top:0px;width:800px;height:600px;background:#c0c0c0"></div>
<div style="left:0px;top:1px;width:799px;height:1px;background:#fff"></div>
<div style="left:1px;top:1px;width:1px;height:598px;background:#fff"></div>
<div style="left:798px;top:0px;width:1px;height:599px;background:#808080"></div>
<div style="left:0px;top:598px;width:799px;height:1px;background:#808080"></div>
<div style="left:799px;top:0px;width:1px;height:600px;background:#000"></div>
<div style="left:0px;top:599px;width:800px;height:1px;background:#000"></div>
<div style="left:3px;top:3px;width:794px;height:18px;background:#000080"></div>
<svg style="left:5px;top:4px" width="16" height="16" viewBox="0 0 16 16"><rect width="16" height="16" fill="#989890"/><rect x="1.6" y="1" width="12.6" height="14.4" fill="#a8a8a8"/><rect x="2" y="1" width="10.5" height=".9" fill="#d4d4d4"/><rect x="2" y="14.5" width="12" height=".9" fill="#d4d4d4"/><rect x="3.6" y="4.6" width="6.4" height="7.6" fill="#dcdcdc"/><rect x="2" y="3" width="1.0" height="1.0" fill="#484848"/><rect x="2" y="5" width="1.0" height="1.0" fill="#484848"/><rect x="2" y="7" width="1.0" height="1.0" fill="#484848"/><rect x="2" y="9" width="1.0" height="1.0" fill="#484848"/><rect x="2" y="11" width="1.0" height="1.0" fill="#484848"/><rect x="2" y="13" width="1.0" height="1.0" fill="#484848"/><rect x="4" y="3" width="1.0" height="1.0" fill="#484848"/><rect x="4" y="5" width="1.0" height="1.0" fill="#484848"/><rect x="4" y="7" width="1.0" height="1.0" fill="#484848"/><rect x="4" y="9" width="1.0" height="1.0" fill="#484848"/><rect x="4" y="11" width="1.0" height="1.0" fill="#484848"/><rect x="4" y="13" width="1.0" height="1.0" fill="#484848"/><rect x="6" y="3" width="1.0" height="1.0" fill="#484848"/><rect x="6" y="5" width="1.0" height="1.0" fill="#484848"/><rect x="5" y="6.2" width="1.3" height="1.3" fill="#000"/><rect x="5" y="8.2" width="1.3" height="1.3" fill="#000"/><rect x="6" y="11" width="1.0" height="1.0" fill="#484848"/><rect x="6" y="13" width="1.0" height="1.0" fill="#484848"/><rect x="8" y="3" width="1.0" height="1.0" fill="#484848"/><rect x="8" y="5" width="1.0" height="1.0" fill="#484848"/><rect x="7" y="6.2" width="1.3" height="1.3" fill="#000"/><rect x="7" y="8.2" width="1.3" height="1.3" fill="#000"/><rect x="8" y="11" width="1.0" height="1.0" fill="#484848"/><rect x="8" y="13" width="1.0" height="1.0" fill="#484848"/><rect x="10" y="3" width="1.0" height="1.0" fill="#484848"/><rect x="10" y="5" width="1.0" height="1.0" fill="#484848"/><rect x="10" y="7" width="1.0" height="1.0" fill="#484848"/><rect x="10" y="9" width="1.0" height="1.0" fill="#484848"/><rect x="10" y="11" width="1.0" height="1.0" fill="#484848"/><rect x="10" y="13" width="1.0" height="1.0" fill="#484848"/><rect x="12" y="3" width="1.0" height="1.0" fill="#484848"/><rect x="12" y="5" width="1.0" height="1.0" fill="#484848"/><rect x="12" y="7" width="1.0" height="1.0" fill="#484848"/><rect x="12" y="9" width="1.0" height="1.0" fill="#484848"/><rect x="12" y="11" width="1.0" height="1.0" fill="#484848"/><rect x="12" y="13" width="1.0" height="1.0" fill="#484848"/><path d="M8.7 6.3l4.7-4.6 2.1 2.1-4.2 4.9z" fill="#1414dc"/><path d="M9.9 6.6l4-3.9" stroke="#6868ff" stroke-width=".8"/><path d="M11.3 8.7l4.2-4.9" stroke="#000070" stroke-width=".7"/></svg>
<span class="cj" style="left:31px;top:4px;"><svg aria-hidden="true" width="61" height="16" viewBox="0 0 61 16" fill="#fff"><use href="#g157f16" x="0"/><use href="#g158f91" x="15"/><use href="#g157a0b" x="30"/><use href="#g155e8f" x="45"/><use href="#g157f16" x="0.7"/><use href="#g158f91" x="15.7"/><use href="#g157a0b" x="30.7"/><use href="#g155e8f" x="45.7"/></svg><span class="sr">编辑程序</span></span>
<span class="t15 b" style="left:91px;top:4px;color:#fff;">  - FX Series - F030811E.e51</span>
<div style="left:779px;top:5px;width:15.5px;height:13.6px;background:#c0c0c0;box-shadow:inset -1px -1px 0 #000,inset 1px 1px 0 #fff,inset -2px -2px 0 #808080"></div>
<svg style="left:783px;top:8px" width="8" height="7" viewBox="0 0 8 7"><path d="M0 0h2v1h1v1h2v-1h1v-1h2v1h-1v1h-1v1h-1v1h1v1h1v1h1v1h-2v-1h-1v-1h-2v1h-1v1h-2v-1h1v-1h1v-1h1v-1h-1v-1h-1v-1h-1z" fill="#000"/></svg>
<span class="cj" style="left:9px;top:24px;"><svg aria-hidden="true" width="31" height="16" viewBox="0 0 31 16" fill="#000"><use href="#g156587" x="0"/><use href="#g154ef6" x="15"/></svg><span class="sr">文件</span></span>
<span class="t15" style="left:39px;top:24px">(<u>F</u>)</span>
<span class="cj" style="left:79px;top:24px;"><svg aria-hidden="true" width="31" height="16" viewBox="0 0 31 16" fill="#000"><use href="#g157f16" x="0"/><use href="#g158f91" x="15"/></svg><span class="sr">编辑</span></span>
<span class="t15" style="left:109px;top:24px">(<u>E</u>)</span>
<span class="cj" style="left:149px;top:24px;"><svg aria-hidden="true" width="31" height="16" viewBox="0 0 31 16" fill="#000"><use href="#g156570" x="0"/><use href="#g15636e" x="15"/></svg><span class="sr">数据</span></span>
<span class="t15" style="left:179px;top:24px">(<u>C</u>)</span>
<span class="cj" style="left:219px;top:24px;"><svg aria-hidden="true" width="31" height="16" viewBox="0 0 31 16" fill="#000"><use href="#g154f18" x="0"/><use href="#g155316" x="15"/></svg><span class="sr">优化</span></span>
<span class="t15" style="left:249px;top:24px">(<u>O</u>)</span>
<span class="cj" style="left:289px;top:24px;"><svg aria-hidden="true" width="31" height="16" viewBox="0 0 31 16" fill="#000"><use href="#g15663e" x="0"/><use href="#g15793a" x="15"/></svg><span class="sr">显示</span></span>
<span class="t15" style="left:319px;top:24px">(<u>V</u>)</span>
<span class="cj" style="left:359px;top:24px;"><svg aria-hidden="true" width="61" height="16" viewBox="0 0 61 16" fill="#000"><use href="#g15673a" x="0"/><use href="#g155668" x="15"/><use href="#g1564cd" x="30"/><use href="#g154f5c" x="45"/></svg><span class="sr">机器操作</span></span>
<span class="t15" style="left:419px;top:24px">(<u>M</u>)</span>
<span class="cj" style="left:459px;top:24px;"><svg aria-hidden="true" width="46" height="16" viewBox="0 0 46 16" fill="#000"><use href="#g156570" x="0"/><use href="#g15636e" x="15"/><use href="#g155e93" x="30"/></svg><span class="sr">数据库</span></span>
<span class="t15" style="left:504px;top:24px">(<u>D</u>)</span>
<span class="cj" style="left:544px;top:24px;"><svg aria-hidden="true" width="31" height="16" viewBox="0 0 31 16" fill="#000"><use href="#g155e2e" x="0"/><use href="#g1552a9" x="15"/></svg><span class="sr">帮助</span></span>
<span class="t15" style="left:574px;top:24px">(<u>H</u>)</span>
<div style="left:3px;top:42px;width:794px;height:1px;background:#808080"></div>
<div style="left:3px;top:43px;width:794px;height:1px;background:#fff"></div>
<div class="tbb" style="left:3px;top:46px;width:23px;height:22px;"></div>
<svg style="left:3px;top:46px" width="23" height="22" viewBox="0 0 23 22"><path d="M6.5 5.5h6l3 3v8h-9z" fill="#fff" stroke="#000"/><path d="M12.5 5.5v3h3" fill="none" stroke="#000"/></svg>
<div class="tbb" style="left:26px;top:46px;width:23px;height:22px;"></div>
<svg style="left:26px;top:46px" width="23" height="22" viewBox="0 0 23 22"><path d="M4.8 8.2l2.3-2.1h2.9l1.7 2.3h2.6v2.3l-5.1.8-4 3.5z" fill="#ff0" stroke="#202000" stroke-width=".7"/><path d="M5.2 15.3l4-3.9 10.4-1-4.6 5.6-9.2.2z" fill="#808000" stroke="#000" stroke-width=".9"/><ellipse cx="11.6" cy="14.1" rx="1.9" ry=".7" fill="#000"/><path d="M11.7 5q3.2-2.6 6.2.6" fill="none" stroke="#000" stroke-width="1.1"/><path d="M18.9 3.9v3.3h-3.3z" fill="#000"/></svg>
<div class="tbb" style="left:49px;top:46px;width:23px;height:22px;"></div>
<svg style="left:49px;top:46px" width="23" height="22" viewBox="0 0 23 22"><path d="M4.5 4.5h12.6v12.2h-11l-1.6-1.6z" fill="#808080" stroke="#000"/><rect x="7.2" y="4.8" width="7.7" height="4.7" fill="#fff"/><rect x="15.6" y="5" width="1" height="1" fill="#fff"/><rect x="7.2" y="11.8" width="8.2" height="4.6" fill="#000"/><rect x="12.3" y="13" width="2.2" height="2.7" fill="#fff"/></svg>
<div class="tbb" style="left:80px;top:46px;width:23px;height:22px;"></div>
<svg style="left:80px;top:46px" width="23" height="22" viewBox="0 0 23 22"><path d="M5.6 5.4l9.6 9.8" stroke="#000" stroke-width="2.5" stroke-linecap="round"/><path d="M17.7 5.2l-5.6 5.4" stroke="#000" stroke-width="1.1"/><path d="M12.1 10.6l-5.8 5.6" stroke="#000" stroke-width="2.2" stroke-linecap="round"/><rect x="17" y="16.6" width="1.1" height="1.1" fill="#000"/></svg>
<div class="tbb" style="left:103px;top:46px;width:23px;height:22px;"></div>
<svg style="left:103px;top:46px" width="23" height="22" viewBox="0 0 23 22"><path d="M4.5 4.5h4.5l3 3v6.5h-7.5z" fill="#989898" stroke="#303030"/><path d="M6 7.5h3M6 9.5h4.5M6 11.5h4.5" stroke="#383838"/><path d="M9 4.5v3h3" fill="none" stroke="#000"/><path d="M11.5 8.5h4.5l3 3v5.8h-7.5z" fill="#fff" stroke="#000"/><path d="M13 11.5h2.5M13 13.5h4.5M13 15.5h4.5" stroke="#000"/></svg>
<div class="tbb" style="left:126px;top:46px;width:23px;height:22px;"></div>
<svg style="left:126px;top:46px" width="23" height="22" viewBox="0 0 23 22"><rect x="3.5" y="5.5" width="12.5" height="10.5" fill="#d4d8d8" stroke="#404040"/><path d="M4 8.5h12M4 11.5h12M4 14.3h12" stroke="#008888" stroke-width=".8"/><path d="M6.5 6v10M10 6v10M13.5 6v10" stroke="#009090" stroke-width=".7"/><path d="M6.5 6.5v-1.5h2v-1.5h2.6v1.5h2v1.5z" fill="#404040" stroke="#000" stroke-width=".6"/><path d="M11.3 11h4.5l3 2.6v4h-7.5z" fill="#fff" stroke="#000"/><path d="M13 14h3M13 16h4.5" stroke="#000"/></svg>
<div class="tbb" style="left:157px;top:46px;width:23px;height:22px;"></div>
<svg style="left:157px;top:46px" width="23" height="22" viewBox="0 0 23 22"><path d="M8.3 4h9.6l-1.9 5.6h-9.8z" fill="#fff" stroke="#000" stroke-width=".9"/><path d="M9.3 5.8h6.8M8.7 7.6h6.8" stroke="#404040" stroke-width=".8"/><path d="M3.4 12.2l2.8-2.8h11l1.6 1.2v4.2l-2.6 2.4h-12.8z" fill="#e4e4e4" stroke="#000" stroke-width="1.1"/><path d="M3.6 12.4h12.8l2.2-1.8M16.4 12.4v4.6" fill="none" stroke="#000" stroke-width=".9"/><rect x="9.7" y="14" width="3.3" height="1.3" fill="#f00"/></svg>
<div class="tbb" style="left:188px;top:46px;width:23px;height:22px;"></div>
<svg style="left:188px;top:46px" width="23" height="22" viewBox="0 0 23 22"><ellipse cx="7.7" cy="10.6" rx="2.9" ry="5.3" fill="#a0a0a0" stroke="#000" stroke-width="1.1"/><ellipse cx="15.1" cy="10.6" rx="2.9" ry="5.3" fill="#a0a0a0" stroke="#000" stroke-width="1.1"/><path d="M6 7.6v6.4M13.4 7.6v6.4" stroke="#000" stroke-width="1.3"/><path d="M7.3 6.6v7.6M14.7 6.6v7.6" stroke="#fff" stroke-width="1.2"/><path d="M9.4 8v5.6M16.8 8v5.6" stroke="#505050" stroke-width="1"/><rect x="10.4" y="8.2" width="2" height="3.6" fill="#000"/><rect x="5.4" y="14.9" width="4.4" height="1.4" fill="#0cc"/><rect x="12.8" y="14.9" width="4.4" height="1.4" fill="#0cc"/><path d="M5.2 16.4h4.8M12.6 16.4h4.8" stroke="#000" stroke-width=".6"/></svg>
<div class="tbb" style="left:219px;top:46px;width:23px;height:22px;"></div>
<svg style="left:219px;top:46px" width="23" height="22" viewBox="0 0 23 22"><path d="M11 2.8v1.6M5 4.2l1.6 1.6M17 4.2l-1.6 1.6M3.4 8.6h2M16.6 8.6h2M5 13.6l1.6-1.4M17 13.6l-1.6-1.4M8 3.4l.7 1.4M14 3.4l-.7 1.4" stroke="#282828" stroke-width="1"/><path d="M11 3.8a4.9 4.9 0 0 1 3.2 8.6l-.7 2h-5l-.7-2a4.9 4.9 0 0 1 3.2-8.6z" fill="#ff0" stroke="#a0a000" stroke-width=".6"/><rect x="9.4" y="6.6" width="1.6" height="1.6" fill="none" stroke="#c8c800" stroke-width=".5" transform="rotate(45 10.2 7.4)"/><path d="M8.8 14.3h4.6v3l-1 1h-2.6l-1-1z" fill="#e8e8e8" stroke="#000" stroke-width=".9"/><path d="M9.6 15.6h3M9.8 16.9h2.4" stroke="#000" stroke-width=".8"/></svg>
<div class="tbb" style="left:242px;top:46px;width:23px;height:22px;"></div>
<svg style="left:242px;top:46px" width="23" height="22" viewBox="0 0 23 22"><path d="M7.6 6.1h-2.4v5.8M16 6.1h1.7v5.8M11.3 9v3" fill="none" stroke="#000" stroke-width="1"/><ellipse cx="11.8" cy="6.1" rx="4.2" ry="2.9" fill="#0cc" stroke="#000" stroke-width="1"/><path d="M9.8 5.6l3-1" stroke="#aff" stroke-width=".9"/><rect x="3.9" y="11.8" width="2.9" height="2.2" rx=".8" fill="#f00"/><rect x="3.9" y="14" width="2.9" height="2.1" fill="#ff0"/><path d="M3.9 16.1h2.9v.8l-1.45 1.5-1.45-1.5z" fill="#00f"/><rect x="9.8" y="11.8" width="2.9" height="2.2" rx=".8" fill="#f00"/><rect x="9.8" y="14" width="2.9" height="2.1" fill="#ff0"/><path d="M9.8 16.1h2.9v.8l-1.45 1.5-1.45-1.5z" fill="#00f"/><rect x="15.9" y="11.8" width="2.9" height="2.2" rx=".8" fill="#f00"/><rect x="15.9" y="14" width="2.9" height="2.1" fill="#ff0"/><path d="M15.9 16.1h2.9v.8l-1.45 1.5-1.45-1.5z" fill="#00f"/></svg>
<div class="tbb" style="left:265px;top:46px;width:23px;height:22px;"></div>
<svg style="left:265px;top:46px" width="23" height="22" viewBox="0 0 23 22"><path d="M7.6 6.2l1.4-1.6h5.6l-1.4 1.6z" fill="#aff" stroke="#000" stroke-width=".7"/><rect x="7.6" y="6.2" width="5.6" height="5" fill="#0ee" stroke="#000" stroke-width=".8"/><path d="M13.2 6.2l1.4-1.6v5l-1.4 1.6z" fill="#00c" stroke="#000" stroke-width=".7"/><rect x="9.6" y="11" width="2.6" height="4.2" fill="#000"/><path d="M3.9 12.4v3.6a2.2 1 0 0 0 4.4 0v-3.6z" fill="#ff0" stroke="#000" stroke-width=".8"/><ellipse cx="6.1" cy="12.3" rx="2.2" ry="1" fill="#ffa" stroke="#000" stroke-width=".7"/><path d="M12.8 11.6v4.4a2.6 1.2 0 0 0 5.2 0v-4.4z" fill="#0d0" stroke="#000" stroke-width=".8"/><ellipse cx="15.4" cy="11.5" rx="2.6" ry="1.2" fill="#5f5" stroke="#000" stroke-width=".7"/><path d="M18 11.4l.9-.9v4.6l-.9.9z" fill="#080" stroke="#000" stroke-width=".5"/></svg>
<div class="tbb" style="left:296px;top:46px;width:23px;height:22px;"></div>
<svg style="left:296px;top:46px" width="23" height="22" viewBox="0 0 23 22"><rect x="3.2" y="4.2" width="15.2" height="2.3" fill="#000"/><rect x="3.2" y="15.3" width="15.2" height="2.3" fill="#000"/><rect x="7.3" y="6.5" width="7.9" height="8.8" fill="#0a7a0a"/><path d="M7.3 6.5v8.8M15.2 6.5v8.8" stroke="#000" stroke-width=".8"/><path d="M7 6.4l3.2-3v2h5.6v-2.4l3.4 3.4-3.4 3.4v-2.4h-5.6v2z" fill="#ff0"/><path d="M3.2 15.3l3.2-3v2h5.4v-2.2l3.2 3.2-3.2 3.2v-2.2h-5.4v2z" fill="#ff0"/></svg>
<div class="tbb" style="left:319px;top:46px;width:23px;height:22px;"></div>
<svg style="left:319px;top:46px" width="23" height="22" viewBox="0 0 23 22"><rect x="2.9" y="4.2" width="15.5" height="1.5" fill="#000"/><rect x="2.9" y="16.1" width="15.5" height="1.5" fill="#000"/><rect x="7.6" y="5.7" width="7.3" height="10.4" fill="#0a8a0a"/><path d="M7.9 5.7v10.4M14.6 5.7v10.4" stroke="#9c6" stroke-width=".7"/><path d="M11.3 3.6l3.6 3.8h-2.4v6.8h2.4l-3.6 3.8-3.6-3.8h2.4v-6.8h-2.4z" fill="#ff0"/></svg>
<div class="tbb" style="left:350px;top:46px;width:23px;height:22px;"></div>
<svg style="left:350px;top:46px" width="23" height="22" viewBox="0 0 23 22"><path d="M8 7.6q0-3.4 4-3.4 4.2 0 4.2 3.2 0 1.8-2 3-1.2.8-1.2 2.4h-2.4q0-2.4 1.6-3.6 1.4-1 1.4-1.9 0-1.1-1.7-1.1-1.6 0-1.6 1.4z" fill="#000" transform="translate(.9 .9)"/><rect x="11.4" y="15.2" width="2.6" height="2.6" fill="#000"/><path d="M8 7.6q0-3.4 4-3.4 4.2 0 4.2 3.2 0 1.8-2 3-1.2.8-1.2 2.4h-2.4q0-2.4 1.6-3.6 1.4-1 1.4-1.9 0-1.1-1.7-1.1-1.6 0-1.6 1.4z" fill="#ff0"/><rect x="10.6" y="14.4" width="2.5" height="2.5" fill="#ff0"/></svg>
<div class="tbb" style="left:373px;top:46px;width:23px;height:22px;"></div>
<svg style="left:373px;top:46px" width="23" height="22" viewBox="0 0 23 22"><path d="M4 4.2v12.4l2.8-2.8 2 4.2 2-1-2-4h3.8z" fill="#000"/><path d="M12.6 7.6q0-3.2 3.4-3.2 3.4 0 3.4 2.8 0 1.6-1.6 2.7-1 .7-1 2.1h-1.6q0-2 1.3-3 1.2-.9 1.2-1.9 0-1.3-1.7-1.3-1.7 0-1.7 1.8z" fill="#000"/><rect x="15" y="13.4" width="1.9" height="1.9" fill="#000"/></svg>
<div style="left:3px;top:90px;width:794px;height:1px;background:#fff"></div>
<div style="left:3px;top:90px;width:1px;height:488px;background:#fff"></div>
<div style="left:796px;top:90px;width:1px;height:488px;background:#101010"></div>
<div style="left:3px;top:577px;width:794px;height:1px;background:#101010"></div>
<div class="tab" style="left:5px;top:73px;width:144px;height:17px;"></div>
<span class="cj" style="left:53px;top:78px;"><svg aria-hidden="true" width="49" height="13" viewBox="0 0 49 13" fill="#000"><use href="#g1257fa" x="0"/><use href="#g12677f" x="12"/><use href="#g126570" x="24"/><use href="#g12636e" x="36"/></svg><span class="sr">基板数据</span></span>
<div class="tab" style="left:293px;top:73px;width:144px;height:17px;"></div>
<span class="cj" style="left:341px;top:78px;"><svg aria-hidden="true" width="49" height="13" viewBox="0 0 49 13" fill="#000"><use href="#g125143" x="0"/><use href="#g124ef6" x="12"/><use href="#g126570" x="24"/><use href="#g12636e" x="36"/></svg><span class="sr">元件数据</span></span>
<div class="tab" style="left:437px;top:73px;width:144px;height:17px;"></div>
<span class="cj" style="left:485px;top:78px;"><svg aria-hidden="true" width="49" height="13" viewBox="0 0 49 13" fill="#000"><use href="#g125438" x="0"/><use href="#g1253d6" x="12"/><use href="#g126570" x="24"/><use href="#g12636e" x="36"/></svg><span class="sr">吸取数据</span></span>
<div class="tab sel" style="left:147px;top:71px;width:148px;height:20px;"></div>
<span class="cj" style="left:197px;top:75px;"><svg aria-hidden="true" width="49" height="13" viewBox="0 0 49 13" fill="#000"><use href="#g128d34" x="0"/><use href="#g127247" x="12"/><use href="#g126570" x="24"/><use href="#g12636e" x="36"/></svg><span class="sr">贴片数据</span></span>
<div style="left:9px;top:94px;width:784px;height:1px;background:#fff"></div>
<div style="left:792px;top:94px;width:1px;height:479px;background:#101010"></div>
<div style="left:30px;top:572px;width:763px;height:1px;background:#101010"></div>
<div style="left:7px;top:96px;width:1px;height:225px;background:#fff"></div>
<div style="left:8px;top:95px;width:1px;height:1px;background:#fff"></div>
<div style="left:10px;top:321px;width:22px;height:1px;background:#000"></div>
<div style="left:9px;top:320px;width:1px;height:1px;background:#000"></div>
<span class="cj" style="left:15px;top:219.6px;transform:rotate(-90deg);transform-origin:0 0;"><svg aria-hidden="true" width="25" height="13" viewBox="0 0 25 13" fill="#000"><use href="#g125217" x="0"/><use href="#g128868" x="12"/></svg><span class="sr">列表</span></span>
<div style="left:10px;top:323px;width:1px;height:219px;background:#fff"></div>
<div style="left:11px;top:322px;width:19px;height:1px;background:#c0c0c0"></div>
<div style="left:12px;top:543px;width:19px;height:1px;background:#000"></div>
<div style="left:11px;top:542px;width:1px;height:1px;background:#000"></div>
<div style="left:30px;top:322px;width:1px;height:250px;background:#fff"></div>
<span class="cj" style="left:16px;top:456px;transform:rotate(-90deg);transform-origin:0 0;"><svg aria-hidden="true" width="49" height="13" viewBox="0 0 49 13" fill="#000"><use href="#g1257fa" x="0"/><use href="#g1251c6" x="12"/><use href="#g129886" x="24"/><use href="#g1257df" x="36"/></svg><span class="sr">基准领域</span></span>
<div style="left:788px;top:101px;width:1px;height:449px;background:#fff"></div>
<div style="left:33px;top:102px;width:753px;height:447px;background:#c0c0c0;overflow:hidden"></div>
<div style="left:90px;top:119px;width:674px;height:430px;background:#fff"></div>
<div class="selcell" style="left:90px;top:119px;width:84px;height:16px;"></div>
<div style="left:91px;top:121px;width:14px;height:12px;background:#c4c4c4"></div>
<div style="left:33px;top:118px;width:57px;height:1px;background:#000"></div>
<div style="left:90px;top:118px;width:674px;height:1px;background:#000"></div>
<div style="left:33px;top:135px;width:57px;height:1px;background:#000"></div>
<div style="left:90px;top:135px;width:674px;height:1px;background:#808080"></div>
<div style="left:33px;top:152px;width:57px;height:1px;background:#000"></div>
<div style="left:90px;top:152px;width:674px;height:1px;background:#808080"></div>
<div style="left:33px;top:169px;width:57px;height:1px;background:#000"></div>
<div style="left:90px;top:169px;width:674px;height:1px;background:#808080"></div>
<div style="left:33px;top:186px;width:57px;height:1px;background:#000"></div>
<div style="left:90px;top:186px;width:674px;height:1px;background:#808080"></div>
<div style="left:33px;top:203px;width:57px;height:1px;background:#000"></div>
<div style="left:90px;top:203px;width:674px;height:1px;background:#808080"></div>
<div style="left:33px;top:220px;width:57px;height:1px;background:#000"></div>
<div style="left:90px;top:220px;width:674px;height:1px;background:#808080"></div>
<div style="left:33px;top:237px;width:57px;height:1px;background:#000"></div>
<div style="left:90px;top:237px;width:674px;height:1px;background:#808080"></div>
<div style="left:33px;top:254px;width:57px;height:1px;background:#000"></div>
<div style="left:90px;top:254px;width:674px;height:1px;background:#808080"></div>
<div style="left:33px;top:271px;width:57px;height:1px;background:#000"></div>
<div style="left:90px;top:271px;width:674px;height:1px;background:#808080"></div>
<div style="left:33px;top:288px;width:57px;height:1px;background:#000"></div>
<div style="left:90px;top:288px;width:674px;height:1px;background:#808080"></div>
<div style="left:33px;top:305px;width:57px;height:1px;background:#000"></div>
<div style="left:90px;top:305px;width:674px;height:1px;background:#808080"></div>
<div style="left:33px;top:322px;width:57px;height:1px;background:#000"></div>
<div style="left:90px;top:322px;width:674px;height:1px;background:#808080"></div>
<div style="left:33px;top:339px;width:57px;height:1px;background:#000"></div>
<div style="left:90px;top:339px;width:674px;height:1px;background:#808080"></div>
<div style="left:33px;top:356px;width:57px;height:1px;background:#000"></div>
<div style="left:90px;top:356px;width:674px;height:1px;background:#808080"></div>
<div style="left:33px;top:373px;width:57px;height:1px;background:#000"></div>
<div style="left:90px;top:373px;width:674px;height:1px;background:#808080"></div>
<div style="left:33px;top:390px;width:57px;height:1px;background:#000"></div>
<div style="left:90px;top:390px;width:674px;height:1px;background:#808080"></div>
<div style="left:33px;top:407px;width:57px;height:1px;background:#000"></div>
<div style="left:90px;top:407px;width:674px;height:1px;background:#808080"></div>
<div style="left:33px;top:424px;width:57px;height:1px;background:#000"></div>
<div style="left:90px;top:424px;width:674px;height:1px;background:#808080"></div>
<div style="left:33px;top:441px;width:57px;height:1px;background:#000"></div>
<div style="left:90px;top:441px;width:674px;height:1px;background:#808080"></div>
<div style="left:33px;top:458px;width:57px;height:1px;background:#000"></div>
<div style="left:90px;top:458px;width:674px;height:1px;background:#808080"></div>
<div style="left:33px;top:475px;width:57px;height:1px;background:#000"></div>
<div style="left:90px;top:475px;width:674px;height:1px;background:#808080"></div>
<div style="left:33px;top:492px;width:57px;height:1px;background:#000"></div>
<div style="left:90px;top:492px;width:674px;height:1px;background:#808080"></div>
<div style="left:33px;top:509px;width:57px;height:1px;background:#000"></div>
<div style="left:90px;top:509px;width:674px;height:1px;background:#808080"></div>
<div style="left:33px;top:526px;width:57px;height:1px;background:#000"></div>
<div style="left:90px;top:526px;width:674px;height:1px;background:#808080"></div>
<div style="left:33px;top:543px;width:57px;height:1px;background:#000"></div>
<div style="left:90px;top:543px;width:674px;height:1px;background:#808080"></div>
<div style="left:89px;top:102px;width:1px;height:16px;background:#000"></div>
<div style="left:89px;top:119px;width:1px;height:430px;background:#000"></div>
<div style="left:174px;top:102px;width:1px;height:16px;background:#000"></div>
<div style="left:174px;top:119px;width:1px;height:430px;background:#808080"></div>
<div style="left:249px;top:102px;width:1px;height:16px;background:#000"></div>
<div style="left:249px;top:119px;width:1px;height:430px;background:#808080"></div>
<div style="left:324px;top:102px;width:1px;height:16px;background:#000"></div>
<div style="left:324px;top:119px;width:1px;height:430px;background:#808080"></div>
<div style="left:389px;top:102px;width:1px;height:16px;background:#000"></div>
<div style="left:389px;top:119px;width:1px;height:430px;background:#808080"></div>
<div style="left:521px;top:102px;width:1px;height:16px;background:#000"></div>
<div style="left:521px;top:119px;width:1px;height:430px;background:#808080"></div>
<div style="left:584px;top:102px;width:1px;height:16px;background:#000"></div>
<div style="left:584px;top:119px;width:1px;height:430px;background:#808080"></div>
<div style="left:631px;top:102px;width:1px;height:16px;background:#000"></div>
<div style="left:631px;top:119px;width:1px;height:430px;background:#808080"></div>
<div style="left:679px;top:102px;width:1px;height:16px;background:#000"></div>
<div style="left:679px;top:119px;width:1px;height:430px;background:#808080"></div>
<div style="left:719px;top:102px;width:1px;height:16px;background:#000"></div>
<div style="left:719px;top:119px;width:1px;height:430px;background:#808080"></div>
<div style="left:764px;top:102px;width:1px;height:16px;background:#000"></div>
<div style="left:764px;top:119px;width:1px;height:430px;background:#808080"></div>
<div style="left:764px;top:119px;width:1px;height:430px;background:#808080"></div>
<div style="left:32px;top:101px;width:755px;height:1px;background:#000"></div>
<div style="left:32px;top:101px;width:1px;height:448px;background:#000"></div>
<div style="left:786px;top:101px;width:1px;height:448px;background:#000"></div>
<div style="left:33px;top:102px;width:56px;height:1px;background:#fff"></div>
<div style="left:33px;top:102px;width:1px;height:16px;background:#fff"></div>
<div style="left:90px;top:102px;width:84px;height:1px;background:#fff"></div>
<div style="left:90px;top:102px;width:1px;height:16px;background:#fff"></div>
<div style="left:175px;top:102px;width:74px;height:1px;background:#fff"></div>
<div style="left:175px;top:102px;width:1px;height:16px;background:#fff"></div>
<div style="left:250px;top:102px;width:74px;height:1px;background:#fff"></div>
<div style="left:250px;top:102px;width:1px;height:16px;background:#fff"></div>
<div style="left:325px;top:102px;width:64px;height:1px;background:#fff"></div>
<div style="left:325px;top:102px;width:1px;height:16px;background:#fff"></div>
<div style="left:390px;top:102px;width:131px;height:1px;background:#fff"></div>
<div style="left:390px;top:102px;width:1px;height:16px;background:#fff"></div>
<div style="left:522px;top:102px;width:62px;height:1px;background:#fff"></div>
<div style="left:522px;top:102px;width:1px;height:16px;background:#fff"></div>
<div style="left:585px;top:102px;width:46px;height:1px;background:#fff"></div>
<div style="left:585px;top:102px;width:1px;height:16px;background:#fff"></div>
<div style="left:632px;top:102px;width:47px;height:1px;background:#fff"></div>
<div style="left:632px;top:102px;width:1px;height:16px;background:#fff"></div>
<div style="left:680px;top:102px;width:39px;height:1px;background:#fff"></div>
<div style="left:680px;top:102px;width:1px;height:16px;background:#fff"></div>
<div style="left:720px;top:102px;width:44px;height:1px;background:#fff"></div>
<div style="left:720px;top:102px;width:1px;height:16px;background:#fff"></div>
<div style="left:33px;top:119px;width:56px;height:1px;background:#fff"></div>
<div style="left:33px;top:119px;width:1px;height:16px;background:#fff"></div>
<div style="left:33px;top:136px;width:56px;height:1px;background:#fff"></div>
<div style="left:33px;top:136px;width:1px;height:16px;background:#fff"></div>
<div style="left:33px;top:153px;width:56px;height:1px;background:#fff"></div>
<div style="left:33px;top:153px;width:1px;height:16px;background:#fff"></div>
<div style="left:33px;top:170px;width:56px;height:1px;background:#fff"></div>
<div style="left:33px;top:170px;width:1px;height:16px;background:#fff"></div>
<div style="left:33px;top:187px;width:56px;height:1px;background:#fff"></div>
<div style="left:33px;top:187px;width:1px;height:16px;background:#fff"></div>
<div style="left:33px;top:204px;width:56px;height:1px;background:#fff"></div>
<div style="left:33px;top:204px;width:1px;height:16px;background:#fff"></div>
<div style="left:33px;top:221px;width:56px;height:1px;background:#fff"></div>
<div style="left:33px;top:221px;width:1px;height:16px;background:#fff"></div>
<div style="left:33px;top:238px;width:56px;height:1px;background:#fff"></div>
<div style="left:33px;top:238px;width:1px;height:16px;background:#fff"></div>
<div style="left:33px;top:255px;width:56px;height:1px;background:#fff"></div>
<div style="left:33px;top:255px;width:1px;height:16px;background:#fff"></div>
<div style="left:33px;top:272px;width:56px;height:1px;background:#fff"></div>
<div style="left:33px;top:272px;width:1px;height:16px;background:#fff"></div>
<div style="left:33px;top:289px;width:56px;height:1px;background:#fff"></div>
<div style="left:33px;top:289px;width:1px;height:16px;background:#fff"></div>
<div style="left:33px;top:306px;width:56px;height:1px;background:#fff"></div>
<div style="left:33px;top:306px;width:1px;height:16px;background:#fff"></div>
<div style="left:33px;top:323px;width:56px;height:1px;background:#fff"></div>
<div style="left:33px;top:323px;width:1px;height:16px;background:#fff"></div>
<div style="left:33px;top:340px;width:56px;height:1px;background:#fff"></div>
<div style="left:33px;top:340px;width:1px;height:16px;background:#fff"></div>
<div style="left:33px;top:357px;width:56px;height:1px;background:#fff"></div>
<div style="left:33px;top:357px;width:1px;height:16px;background:#fff"></div>
<div style="left:33px;top:374px;width:56px;height:1px;background:#fff"></div>
<div style="left:33px;top:374px;width:1px;height:16px;background:#fff"></div>
<div style="left:33px;top:391px;width:56px;height:1px;background:#fff"></div>
<div style="left:33px;top:391px;width:1px;height:16px;background:#fff"></div>
<div style="left:33px;top:408px;width:56px;height:1px;background:#fff"></div>
<div style="left:33px;top:408px;width:1px;height:16px;background:#fff"></div>
<div style="left:33px;top:425px;width:56px;height:1px;background:#fff"></div>
<div style="left:33px;top:425px;width:1px;height:16px;background:#fff"></div>
<div style="left:33px;top:442px;width:56px;height:1px;background:#fff"></div>
<div style="left:33px;top:442px;width:1px;height:16px;background:#fff"></div>
<div style="left:33px;top:459px;width:56px;height:1px;background:#fff"></div>
<div style="left:33px;top:459px;width:1px;height:16px;background:#fff"></div>
<div style="left:33px;top:476px;width:56px;height:1px;background:#fff"></div>
<div style="left:33px;top:476px;width:1px;height:16px;background:#fff"></div>
<div style="left:33px;top:493px;width:56px;height:1px;background:#fff"></div>
<div style="left:33px;top:493px;width:1px;height:16px;background:#fff"></div>
<div style="left:33px;top:510px;width:56px;height:1px;background:#fff"></div>
<div style="left:33px;top:510px;width:1px;height:16px;background:#fff"></div>
<div style="left:33px;top:527px;width:56px;height:1px;background:#fff"></div>
<div style="left:33px;top:527px;width:1px;height:16px;background:#fff"></div>
<div style="left:33px;top:544px;width:56px;height:1px;background:#fff"></div>
<div style="left:33px;top:544px;width:1px;height:5px;background:#fff"></div>
<span class="cj" style="left:34px;top:104px;"><svg aria-hidden="true" width="25" height="13" viewBox="0 0 25 13" fill="#000"><use href="#g127f16" x="0"/><use href="#g1253f7" x="12"/></svg><span class="sr">编号</span></span>
<svg style="left:92px;top:105px" width="7" height="10" viewBox="0 0 7 10"><path d="M3 0h1v1h1v1h1v1h1v1h-7v-1h1v-1h1v-1h1zM0 5h7v1h-1v1h-1v1h-1v1h-1v-1h-1v-1h-1v-1h-1z" fill="#008080"/></svg>
<span class="cj" style="left:100px;top:104px;"><svg aria-hidden="true" width="25" height="13" viewBox="0 0 25 13" fill="#000"><use href="#g125143" x="0"/><use href="#g124ef6" x="12"/></svg><span class="sr">元件</span></span>
<span class="t12" style="left:124px;top:104px;">ID</span>
<svg style="left:177px;top:105px" width="7" height="10" viewBox="0 0 7 10"><path d="M3 0h1v1h1v1h1v1h1v1h-7v-1h1v-1h1v-1h1zM0 5h7v1h-1v1h-1v1h-1v1h-1v-1h-1v-1h-1v-1h-1z" fill="#008080"/></svg>
<span class="cj" style="left:185px;top:104px;"><svg aria-hidden="true" width="49" height="13" viewBox="0 0 49 13" fill="#000"><use href="#g128d34" x="0"/><use href="#g127247" x="12"/><use href="#g124f4d" x="24"/><use href="#g127f6e" x="36"/></svg><span class="sr">贴片位置</span></span>
<span class="t12" style="left:233px;top:104px;"> X</span>
<svg style="left:252px;top:105px" width="7" height="10" viewBox="0 0 7 10"><path d="M3 0h1v1h1v1h1v1h1v1h-7v-1h1v-1h1v-1h1zM0 5h7v1h-1v1h-1v1h-1v1h-1v-1h-1v-1h-1v-1h-1z" fill="#008080"/></svg>
<span class="cj" style="left:260px;top:104px;"><svg aria-hidden="true" width="49" height="13" viewBox="0 0 49 13" fill="#000"><use href="#g128d34" x="0"/><use href="#g127247" x="12"/><use href="#g124f4d" x="24"/><use href="#g127f6e" x="36"/></svg><span class="sr">贴片位置</span></span>
<span class="t12" style="left:308px;top:104px;"> Y</span>
<svg style="left:327px;top:105px" width="7" height="10" viewBox="0 0 7 10"><path d="M3 0h1v1h1v1h1v1h1v1h-7v-1h1v-1h1v-1h1zM0 5h7v1h-1v1h-1v1h-1v1h-1v-1h-1v-1h-1v-1h-1z" fill="#008080"/></svg>
<span class="cj" style="left:335px;top:104px;"><svg aria-hidden="true" width="49" height="13" viewBox="0 0 49 13" fill="#000"><use href="#g128d34" x="0"/><use href="#g127247" x="12"/><use href="#g1289d2" x="24"/><use href="#g125ea6" x="36"/></svg><span class="sr">贴片角度</span></span>
<svg style="left:392px;top:105px" width="7" height="10" viewBox="0 0 7 10"><path d="M3 0h1v1h1v1h1v1h1v1h-7v-1h1v-1h1v-1h1zM0 5h7v1h-1v1h-1v1h-1v1h-1v-1h-1v-1h-1v-1h-1z" fill="#008080"/></svg>
<span class="cj" style="left:400px;top:104px;"><svg aria-hidden="true" width="49" height="13" viewBox="0 0 49 13" fill="#000"><use href="#g125143" x="0"/><use href="#g124ef6" x="12"/><use href="#g12540d" x="24"/><use href="#g1279f0" x="36"/></svg><span class="sr">元件名称</span></span>
<svg style="left:524px;top:105px" width="7" height="10" viewBox="0 0 7 10"><path d="M3 0h1v1h1v1h1v1h1v1h-7v-1h1v-1h1v-1h1zM0 5h7v1h-1v1h-1v1h-1v1h-1v-1h-1v-1h-1v-1h-1z" fill="#008080"/></svg>
<span class="t12" style="left:532px;top:104px;">Head</span>
<svg style="left:587px;top:105px" width="7" height="10" viewBox="0 0 7 10"><path d="M3 0h1v1h1v1h1v1h1v1h-7v-1h1v-1h1v-1h1zM0 5h7v1h-1v1h-1v1h-1v1h-1v-1h-1v-1h-1v-1h-1z" fill="#008080"/></svg>
<span class="cj" style="left:595px;top:104px;"><svg aria-hidden="true" width="25" height="13" viewBox="0 0 25 13" fill="#000"><use href="#g126807" x="0"/><use href="#g128bb0" x="12"/></svg><span class="sr">标记</span></span>
<svg style="left:634px;top:105px" width="7" height="10" viewBox="0 0 7 10"><path d="M3 0h1v1h1v1h1v1h1v1h-7v-1h1v-1h1v-1h1zM0 5h7v1h-1v1h-1v1h-1v1h-1v-1h-1v-1h-1v-1h-1z" fill="#008080"/></svg>
<span class="cj" style="left:642px;top:104px;"><svg aria-hidden="true" width="25" height="13" viewBox="0 0 25 13" fill="#000"><use href="#g125ffd" x="0"/><use href="#g127565" x="12"/></svg><span class="sr">忽略</span></span>
<svg style="left:682px;top:105px" width="7" height="10" viewBox="0 0 7 10"><path d="M3 0h1v1h1v1h1v1h1v1h-7v-1h1v-1h1v-1h1zM0 5h7v1h-1v1h-1v1h-1v1h-1v-1h-1v-1h-1v-1h-1z" fill="#008080"/></svg>
<span class="cj" style="left:690px;top:104px;"><svg aria-hidden="true" width="25" height="13" viewBox="0 0 25 13" fill="#000"><use href="#g128bd5" x="0"/><use href="#g126253" x="12"/></svg><span class="sr">试打</span></span>
<svg style="left:722px;top:105px" width="7" height="10" viewBox="0 0 7 10"><path d="M3 0h1v1h1v1h1v1h1v1h-7v-1h1v-1h1v-1h1zM0 5h7v1h-1v1h-1v1h-1v1h-1v-1h-1v-1h-1v-1h-1z" fill="#008080"/></svg>
<span class="cj" style="left:730px;top:104px;"><svg aria-hidden="true" width="13" height="13" viewBox="0 0 13 13" fill="#000"><use href="#g125c42" x="0"/></svg><span class="sr">层</span></span>
<div style="left:0;top:0;width:800px;height:549px;overflow:hidden">
<span class="t12" style="left:81px;top:121px;">1</span>
<span class="t12" style="left:92px;top:121px;">A1</span>
<span class="t12" style="left:211px;top:121px;">185.00</span>
<span class="t12" style="left:292px;top:121px;">59.00</span>
<span class="t12" style="left:357px;top:121px;">90.00</span>
<span class="t12" style="left:392px;top:121px;">Al Cap</span>
<span class="cj" style="left:530px;top:121px;"><svg aria-hidden="true" width="49" height="13" viewBox="0 0 49 13" fill="#000"><use href="#g1281ea" x="0"/><use href="#g1252a8" x="12"/><use href="#g129009" x="24"/><use href="#g1262e9" x="36"/></svg><span class="sr">自动选择</span></span>
<span class="cj" style="left:593px;top:121px;"><svg aria-hidden="true" width="13" height="13" viewBox="0 0 13 13" fill="#000"><use href="#g125426" x="0"/></svg><span class="sr">否</span></span>
<span class="cj" style="left:640px;top:121px;"><svg aria-hidden="true" width="13" height="13" viewBox="0 0 13 13" fill="#000"><use href="#g125426" x="0"/></svg><span class="sr">否</span></span>
<span class="cj" style="left:688px;top:121px;"><svg aria-hidden="true" width="13" height="13" viewBox="0 0 13 13" fill="#000"><use href="#g125426" x="0"/></svg><span class="sr">否</span></span>
<span class="cj" style="left:728px;top:121px;"><svg aria-hidden="true" width="13" height="13" viewBox="0 0 13 13" fill="#000"><use href="#g125c42" x="0"/></svg><span class="sr">层</span></span>
<span class="t12" style="left:746px;top:121px;">4</span>
<span class="t12" style="left:81px;top:138px;">2</span>
<span class="t12" style="left:92px;top:138px;">A2</span>
<span class="t12" style="left:211px;top:138px;">175.00</span>
<span class="t12" style="left:292px;top:138px;">59.00</span>
<span class="t12" style="left:351px;top:138px;">180.00</span>
<span class="t12" style="left:392px;top:138px;">Al Cap</span>
<span class="cj" style="left:530px;top:138px;"><svg aria-hidden="true" width="49" height="13" viewBox="0 0 49 13" fill="#000"><use href="#g1281ea" x="0"/><use href="#g1252a8" x="12"/><use href="#g129009" x="24"/><use href="#g1262e9" x="36"/></svg><span class="sr">自动选择</span></span>
<span class="cj" style="left:593px;top:138px;"><svg aria-hidden="true" width="13" height="13" viewBox="0 0 13 13" fill="#000"><use href="#g125426" x="0"/></svg><span class="sr">否</span></span>
<span class="cj" style="left:640px;top:138px;"><svg aria-hidden="true" width="13" height="13" viewBox="0 0 13 13" fill="#000"><use href="#g125426" x="0"/></svg><span class="sr">否</span></span>
<span class="cj" style="left:688px;top:138px;"><svg aria-hidden="true" width="13" height="13" viewBox="0 0 13 13" fill="#000"><use href="#g125426" x="0"/></svg><span class="sr">否</span></span>
<span class="cj" style="left:728px;top:138px;"><svg aria-hidden="true" width="13" height="13" viewBox="0 0 13 13" fill="#000"><use href="#g125c42" x="0"/></svg><span class="sr">层</span></span>
<span class="t12" style="left:746px;top:138px;">4</span>
<span class="t12" style="left:81px;top:155px;">3</span>
<span class="t12" style="left:92px;top:155px;">A3</span>
<span class="t12" style="left:211px;top:155px;">165.00</span>
<span class="t12" style="left:292px;top:155px;">59.00</span>
<span class="t12" style="left:351px;top:155px;">270.00</span>
<span class="t12" style="left:392px;top:155px;">Al Cap</span>
<span class="cj" style="left:530px;top:155px;"><svg aria-hidden="true" width="49" height="13" viewBox="0 0 49 13" fill="#000"><use href="#g1281ea" x="0"/><use href="#g1252a8" x="12"/><use href="#g129009" x="24"/><use href="#g1262e9" x="36"/></svg><span class="sr">自动选择</span></span>
<span class="cj" style="left:593px;top:155px;"><svg aria-hidden="true" width="13" height="13" viewBox="0 0 13 13" fill="#000"><use href="#g125426" x="0"/></svg><span class="sr">否</span></span>
<span class="cj" style="left:640px;top:155px;"><svg aria-hidden="true" width="13" height="13" viewBox="0 0 13 13" fill="#000"><use href="#g125426" x="0"/></svg><span class="sr">否</span></span>
<span class="cj" style="left:688px;top:155px;"><svg aria-hidden="true" width="13" height="13" viewBox="0 0 13 13" fill="#000"><use href="#g125426" x="0"/></svg><span class="sr">否</span></span>
<span class="cj" style="left:728px;top:155px;"><svg aria-hidden="true" width="13" height="13" viewBox="0 0 13 13" fill="#000"><use href="#g125c42" x="0"/></svg><span class="sr">层</span></span>
<span class="t12" style="left:746px;top:155px;">4</span>
<span class="t12" style="left:81px;top:172px;">4</span>
<span class="t12" style="left:92px;top:172px;">A4</span>
<span class="t12" style="left:211px;top:172px;">155.00</span>
<span class="t12" style="left:292px;top:172px;">59.00</span>
<span class="t12" style="left:363px;top:172px;">0.00</span>
<span class="t12" style="left:392px;top:172px;">Al Cap</span>
<span class="cj" style="left:530px;top:172px;"><svg aria-hidden="true" width="49" height="13" viewBox="0 0 49 13" fill="#000"><use href="#g1281ea" x="0"/><use href="#g1252a8" x="12"/><use href="#g129009" x="24"/><use href="#g1262e9" x="36"/></svg><span class="sr">自动选择</span></span>
<span class="cj" style="left:593px;top:172px;"><svg aria-hidden="true" width="13" height="13" viewBox="0 0 13 13" fill="#000"><use href="#g125426" x="0"/></svg><span class="sr">否</span></span>
<span class="cj" style="left:640px;top:172px;"><svg aria-hidden="true" width="13" height="13" viewBox="0 0 13 13" fill="#000"><use href="#g125426" x="0"/></svg><span class="sr">否</span></span>
<span class="cj" style="left:688px;top:172px;"><svg aria-hidden="true" width="13" height="13" viewBox="0 0 13 13" fill="#000"><use href="#g125426" x="0"/></svg><span class="sr">否</span></span>
<span class="cj" style="left:728px;top:172px;"><svg aria-hidden="true" width="13" height="13" viewBox="0 0 13 13" fill="#000"><use href="#g125c42" x="0"/></svg><span class="sr">层</span></span>
<span class="t12" style="left:746px;top:172px;">4</span>
<span class="t12" style="left:81px;top:189px;">5</span>
<span class="t12" style="left:92px;top:189px;">A5</span>
<span class="t12" style="left:211px;top:189px;">145.00</span>
<span class="t12" style="left:292px;top:189px;">59.00</span>
<span class="t12" style="left:357px;top:189px;">45.00</span>
<span class="t12" style="left:392px;top:189px;">Al Cap</span>
<span class="cj" style="left:530px;top:189px;"><svg aria-hidden="true" width="49" height="13" viewBox="0 0 49 13" fill="#000"><use href="#g1281ea" x="0"/><use href="#g1252a8" x="12"/><use href="#g129009" x="24"/><use href="#g1262e9" x="36"/></svg><span class="sr">自动选择</span></span>
<span class="cj" style="left:593px;top:189px;"><svg aria-hidden="true" width="13" height="13" viewBox="0 0 13 13" fill="#000"><use href="#g125426" x="0"/></svg><span class="sr">否</span></span>
<span class="cj" style="left:640px;top:189px;"><svg aria-hidden="true" width="13" height="13" viewBox="0 0 13 13" fill="#000"><use href="#g125426" x="0"/></svg><span class="sr">否</span></span>
<span class="cj" style="left:688px;top:189px;"><svg aria-hidden="true" width="13" height="13" viewBox="0 0 13 13" fill="#000"><use href="#g125426" x="0"/></svg><span class="sr">否</span></span>
<span class="cj" style="left:728px;top:189px;"><svg aria-hidden="true" width="13" height="13" viewBox="0 0 13 13" fill="#000"><use href="#g125c42" x="0"/></svg><span class="sr">层</span></span>
<span class="t12" style="left:746px;top:189px;">4</span>
<span class="t12" style="left:81px;top:206px;">6</span>
<span class="t12" style="left:92px;top:206px;">A6</span>
<span class="t12" style="left:211px;top:206px;">135.00</span>
<span class="t12" style="left:292px;top:206px;">59.00</span>
<span class="t12" style="left:351px;top:206px;">135.00</span>
<span class="t12" style="left:392px;top:206px;">Al Cap</span>
<span class="cj" style="left:530px;top:206px;"><svg aria-hidden="true" width="49" height="13" viewBox="0 0 49 13" fill="#000"><use href="#g1281ea" x="0"/><use href="#g1252a8" x="12"/><use href="#g129009" x="24"/><use href="#g1262e9" x="36"/></svg><span class="sr">自动选择</span></span>
<span class="cj" style="left:593px;top:206px;"><svg aria-hidden="true" width="13" height="13" viewBox="0 0 13 13" fill="#000"><use href="#g125426" x="0"/></svg><span class="sr">否</span></span>
<span class="cj" style="left:640px;top:206px;"><svg aria-hidden="true" width="13" height="13" viewBox="0 0 13 13" fill="#000"><use href="#g125426" x="0"/></svg><span class="sr">否</span></span>
<span class="cj" style="left:688px;top:206px;"><svg aria-hidden="true" width="13" height="13" viewBox="0 0 13 13" fill="#000"><use href="#g125426" x="0"/></svg><span class="sr">否</span></span>
<span class="cj" style="left:728px;top:206px;"><svg aria-hidden="true" width="13" height="13" viewBox="0 0 13 13" fill="#000"><use href="#g125c42" x="0"/></svg><span class="sr">层</span></span>
<span class="t12" style="left:746px;top:206px;">4</span>
<span class="t12" style="left:81px;top:223px;">7</span>
<span class="t12" style="left:92px;top:223px;">B1</span>
<span class="t12" style="left:211px;top:223px;">185.00</span>
<span class="t12" style="left:292px;top:223px;">69.00</span>
<span class="t12" style="left:351px;top:223px;">180.00</span>
<span class="t12" style="left:392px;top:223px;">Ta Cap</span>
<span class="cj" style="left:530px;top:223px;"><svg aria-hidden="true" width="49" height="13" viewBox="0 0 49 13" fill="#000"><use href="#g1281ea" x="0"/><use href="#g1252a8" x="12"/><use href="#g129009" x="24"/><use href="#g1262e9" x="36"/></svg><span class="sr">自动选择</span></span>
<span class="cj" style="left:593px;top:223px;"><svg aria-hidden="true" width="13" height="13" viewBox="0 0 13 13" fill="#000"><use href="#g125426" x="0"/></svg><span class="sr">否</span></span>
<span class="cj" style="left:640px;top:223px;"><svg aria-hidden="true" width="13" height="13" viewBox="0 0 13 13" fill="#000"><use href="#g125426" x="0"/></svg><span class="sr">否</span></span>
<span class="cj" style="left:688px;top:223px;"><svg aria-hidden="true" width="13" height="13" viewBox="0 0 13 13" fill="#000"><use href="#g125426" x="0"/></svg><span class="sr">否</span></span>
<span class="cj" style="left:728px;top:223px;"><svg aria-hidden="true" width="13" height="13" viewBox="0 0 13 13" fill="#000"><use href="#g125c42" x="0"/></svg><span class="sr">层</span></span>
<span class="t12" style="left:746px;top:223px;">4</span>
<span class="t12" style="left:81px;top:240px;">8</span>
<span class="t12" style="left:92px;top:240px;">B2</span>
<span class="t12" style="left:211px;top:240px;">175.00</span>
<span class="t12" style="left:292px;top:240px;">69.00</span>
<span class="t12" style="left:357px;top:240px;">90.00</span>
<span class="t12" style="left:392px;top:240px;">Ta Cap</span>
<span class="cj" style="left:530px;top:240px;"><svg aria-hidden="true" width="49" height="13" viewBox="0 0 49 13" fill="#000"><use href="#g1281ea" x="0"/><use href="#g1252a8" x="12"/><use href="#g129009" x="24"/><use href="#g1262e9" x="36"/></svg><span class="sr">自动选择</span></span>
<span class="cj" style="left:593px;top:240px;"><svg aria-hidden="true" width="13" height="13" viewBox="0 0 13 13" fill="#000"><use href="#g125426" x="0"/></svg><span class="sr">否</span></span>
<span class="cj" style="left:640px;top:240px;"><svg aria-hidden="true" width="13" height="13" viewBox="0 0 13 13" fill="#000"><use href="#g125426" x="0"/></svg><span class="sr">否</span></span>
<span class="cj" style="left:688px;top:240px;"><svg aria-hidden="true" width="13" height="13" viewBox="0 0 13 13" fill="#000"><use href="#g125426" x="0"/></svg><span class="sr">否</span></span>
<span class="cj" style="left:728px;top:240px;"><svg aria-hidden="true" width="13" height="13" viewBox="0 0 13 13" fill="#000"><use href="#g125c42" x="0"/></svg><span class="sr">层</span></span>
<span class="t12" style="left:746px;top:240px;">4</span>
<span class="t12" style="left:81px;top:257px;">9</span>
<span class="t12" style="left:92px;top:257px;">B3</span>
<span class="t12" style="left:211px;top:257px;">165.00</span>
<span class="t12" style="left:292px;top:257px;">69.00</span>
<span class="t12" style="left:363px;top:257px;">0.00</span>
<span class="t12" style="left:392px;top:257px;">Ta Cap</span>
<span class="cj" style="left:530px;top:257px;"><svg aria-hidden="true" width="49" height="13" viewBox="0 0 49 13" fill="#000"><use href="#g1281ea" x="0"/><use href="#g1252a8" x="12"/><use href="#g129009" x="24"/><use href="#g1262e9" x="36"/></svg><span class="sr">自动选择</span></span>
<span class="cj" style="left:593px;top:257px;"><svg aria-hidden="true" width="13" height="13" viewBox="0 0 13 13" fill="#000"><use href="#g125426" x="0"/></svg><span class="sr">否</span></span>
<span class="cj" style="left:640px;top:257px;"><svg aria-hidden="true" width="13" height="13" viewBox="0 0 13 13" fill="#000"><use href="#g125426" x="0"/></svg><span class="sr">否</span></span>
<span class="cj" style="left:688px;top:257px;"><svg aria-hidden="true" width="13" height="13" viewBox="0 0 13 13" fill="#000"><use href="#g125426" x="0"/></svg><span class="sr">否</span></span>
<span class="cj" style="left:728px;top:257px;"><svg aria-hidden="true" width="13" height="13" viewBox="0 0 13 13" fill="#000"><use href="#g125c42" x="0"/></svg><span class="sr">层</span></span>
<span class="t12" style="left:746px;top:257px;">4</span>
<span class="t12" style="left:75px;top:274px;">10</span>
<span class="t12" style="left:92px;top:274px;">B4</span>
<span class="t12" style="left:211px;top:274px;">155.00</span>
<span class="t12" style="left:292px;top:274px;">69.00</span>
<span class="t12" style="left:351px;top:274px;">270.00</span>
<span class="t12" style="left:392px;top:274px;">Ta Cap</span>
<span class="cj" style="left:530px;top:274px;"><svg aria-hidden="true" width="49" height="13" viewBox="0 0 49 13" fill="#000"><use href="#g1281ea" x="0"/><use href="#g1252a8" x="12"/><use href="#g129009" x="24"/><use href="#g1262e9" x="36"/></svg><span class="sr">自动选择</span></span>
<span class="cj" style="left:593px;top:274px;"><svg aria-hidden="true" width="13" height="13" viewBox="0 0 13 13" fill="#000"><use href="#g125426" x="0"/></svg><span class="sr">否</span></span>
<span class="cj" style="left:640px;top:274px;"><svg aria-hidden="true" width="13" height="13" viewBox="0 0 13 13" fill="#000"><use href="#g125426" x="0"/></svg><span class="sr">否</span></span>
<span class="cj" style="left:688px;top:274px;"><svg aria-hidden="true" width="13" height="13" viewBox="0 0 13 13" fill="#000"><use href="#g125426" x="0"/></svg><span class="sr">否</span></span>
<span class="cj" style="left:728px;top:274px;"><svg aria-hidden="true" width="13" height="13" viewBox="0 0 13 13" fill="#000"><use href="#g125c42" x="0"/></svg><span class="sr">层</span></span>
<span class="t12" style="left:746px;top:274px;">4</span>
<span class="t12" style="left:75px;top:291px;">11</span>
<span class="t12" style="left:92px;top:291px;">B5</span>
<span class="t12" style="left:211px;top:291px;">145.00</span>
<span class="t12" style="left:292px;top:291px;">69.00</span>
<span class="t12" style="left:351px;top:291px;">315.00</span>
<span class="t12" style="left:392px;top:291px;">Ta Cap</span>
<span class="cj" style="left:530px;top:291px;"><svg aria-hidden="true" width="49" height="13" viewBox="0 0 49 13" fill="#000"><use href="#g1281ea" x="0"/><use href="#g1252a8" x="12"/><use href="#g129009" x="24"/><use href="#g1262e9" x="36"/></svg><span class="sr">自动选择</span></span>
<span class="cj" style="left:593px;top:291px;"><svg aria-hidden="true" width="13" height="13" viewBox="0 0 13 13" fill="#000"><use href="#g125426" x="0"/></svg><span class="sr">否</span></span>
<span class="cj" style="left:640px;top:291px;"><svg aria-hidden="true" width="13" height="13" viewBox="0 0 13 13" fill="#000"><use href="#g125426" x="0"/></svg><span class="sr">否</span></span>
<span class="cj" style="left:688px;top:291px;"><svg aria-hidden="true" width="13" height="13" viewBox="0 0 13 13" fill="#000"><use href="#g125426" x="0"/></svg><span class="sr">否</span></span>
<span class="cj" style="left:728px;top:291px;"><svg aria-hidden="true" width="13" height="13" viewBox="0 0 13 13" fill="#000"><use href="#g125c42" x="0"/></svg><span class="sr">层</span></span>
<span class="t12" style="left:746px;top:291px;">4</span>
<span class="t12" style="left:75px;top:308px;">12</span>
<span class="t12" style="left:92px;top:308px;">B6</span>
<span class="t12" style="left:211px;top:308px;">135.00</span>
<span class="t12" style="left:292px;top:308px;">69.00</span>
<span class="t12" style="left:357px;top:308px;">45.00</span>
<span class="t12" style="left:392px;top:308px;">Ta Cap</span>
<span class="cj" style="left:530px;top:308px;"><svg aria-hidden="true" width="49" height="13" viewBox="0 0 49 13" fill="#000"><use href="#g1281ea" x="0"/><use href="#g1252a8" x="12"/><use href="#g129009" x="24"/><use href="#g1262e9" x="36"/></svg><span class="sr">自动选择</span></span>
<span class="cj" style="left:593px;top:308px;"><svg aria-hidden="true" width="13" height="13" viewBox="0 0 13 13" fill="#000"><use href="#g125426" x="0"/></svg><span class="sr">否</span></span>
<span class="cj" style="left:640px;top:308px;"><svg aria-hidden="true" width="13" height="13" viewBox="0 0 13 13" fill="#000"><use href="#g125426" x="0"/></svg><span class="sr">否</span></span>
<span class="cj" style="left:688px;top:308px;"><svg aria-hidden="true" width="13" height="13" viewBox="0 0 13 13" fill="#000"><use href="#g125426" x="0"/></svg><span class="sr">否</span></span>
<span class="cj" style="left:728px;top:308px;"><svg aria-hidden="true" width="13" height="13" viewBox="0 0 13 13" fill="#000"><use href="#g125c42" x="0"/></svg><span class="sr">层</span></span>
<span class="t12" style="left:746px;top:308px;">4</span>
<span class="t12" style="left:75px;top:325px;">13</span>
<span class="t12" style="left:92px;top:325px;">C1</span>
<span class="t12" style="left:211px;top:325px;">185.00</span>
<span class="t12" style="left:292px;top:325px;">79.00</span>
<span class="t12" style="left:351px;top:325px;">180.00</span>
<span class="t12" style="left:392px;top:325px;">VR1</span>
<span class="cj" style="left:530px;top:325px;"><svg aria-hidden="true" width="49" height="13" viewBox="0 0 49 13" fill="#000"><use href="#g1281ea" x="0"/><use href="#g1252a8" x="12"/><use href="#g129009" x="24"/><use href="#g1262e9" x="36"/></svg><span class="sr">自动选择</span></span>
<span class="cj" style="left:593px;top:325px;"><svg aria-hidden="true" width="13" height="13" viewBox="0 0 13 13" fill="#000"><use href="#g125426" x="0"/></svg><span class="sr">否</span></span>
<span class="cj" style="left:640px;top:325px;"><svg aria-hidden="true" width="13" height="13" viewBox="0 0 13 13" fill="#000"><use href="#g125426" x="0"/></svg><span class="sr">否</span></span>
<span class="cj" style="left:688px;top:325px;"><svg aria-hidden="true" width="13" height="13" viewBox="0 0 13 13" fill="#000"><use href="#g125426" x="0"/></svg><span class="sr">否</span></span>
<span class="cj" style="left:728px;top:325px;"><svg aria-hidden="true" width="13" height="13" viewBox="0 0 13 13" fill="#000"><use href="#g125c42" x="0"/></svg><span class="sr">层</span></span>
<span class="t12" style="left:746px;top:325px;">4</span>
<span class="t12" style="left:75px;top:342px;">14</span>
<span class="t12" style="left:92px;top:342px;">C2</span>
<span class="t12" style="left:211px;top:342px;">175.00</span>
<span class="t12" style="left:292px;top:342px;">79.00</span>
<span class="t12" style="left:357px;top:342px;">90.00</span>
<span class="t12" style="left:392px;top:342px;">VR1</span>
<span class="cj" style="left:530px;top:342px;"><svg aria-hidden="true" width="49" height="13" viewBox="0 0 49 13" fill="#000"><use href="#g1281ea" x="0"/><use href="#g1252a8" x="12"/><use href="#g129009" x="24"/><use href="#g1262e9" x="36"/></svg><span class="sr">自动选择</span></span>
<span class="cj" style="left:593px;top:342px;"><svg aria-hidden="true" width="13" height="13" viewBox="0 0 13 13" fill="#000"><use href="#g125426" x="0"/></svg><span class="sr">否</span></span>
<span class="cj" style="left:640px;top:342px;"><svg aria-hidden="true" width="13" height="13" viewBox="0 0 13 13" fill="#000"><use href="#g125426" x="0"/></svg><span class="sr">否</span></span>
<span class="cj" style="left:688px;top:342px;"><svg aria-hidden="true" width="13" height="13" viewBox="0 0 13 13" fill="#000"><use href="#g125426" x="0"/></svg><span class="sr">否</span></span>
<span class="cj" style="left:728px;top:342px;"><svg aria-hidden="true" width="13" height="13" viewBox="0 0 13 13" fill="#000"><use href="#g125c42" x="0"/></svg><span class="sr">层</span></span>
<span class="t12" style="left:746px;top:342px;">4</span>
<span class="t12" style="left:75px;top:359px;">15</span>
<span class="t12" style="left:92px;top:359px;">C3</span>
<span class="t12" style="left:211px;top:359px;">165.00</span>
<span class="t12" style="left:292px;top:359px;">79.00</span>
<span class="t12" style="left:363px;top:359px;">0.00</span>
<span class="t12" style="left:392px;top:359px;">VR1</span>
<span class="cj" style="left:530px;top:359px;"><svg aria-hidden="true" width="49" height="13" viewBox="0 0 49 13" fill="#000"><use href="#g1281ea" x="0"/><use href="#g1252a8" x="12"/><use href="#g129009" x="24"/><use href="#g1262e9" x="36"/></svg><span class="sr">自动选择</span></span>
<span class="cj" style="left:593px;top:359px;"><svg aria-hidden="true" width="13" height="13" viewBox="0 0 13 13" fill="#000"><use href="#g125426" x="0"/></svg><span class="sr">否</span></span>
<span class="cj" style="left:640px;top:359px;"><svg aria-hidden="true" width="13" height="13" viewBox="0 0 13 13" fill="#000"><use href="#g125426" x="0"/></svg><span class="sr">否</span></span>
<span class="cj" style="left:688px;top:359px;"><svg aria-hidden="true" width="13" height="13" viewBox="0 0 13 13" fill="#000"><use href="#g125426" x="0"/></svg><span class="sr">否</span></span>
<span class="cj" style="left:728px;top:359px;"><svg aria-hidden="true" width="13" height="13" viewBox="0 0 13 13" fill="#000"><use href="#g125c42" x="0"/></svg><span class="sr">层</span></span>
<span class="t12" style="left:746px;top:359px;">4</span>
<span class="t12" style="left:75px;top:376px;">16</span>
<span class="t12" style="left:92px;top:376px;">C4</span>
<span class="t12" style="left:211px;top:376px;">155.00</span>
<span class="t12" style="left:292px;top:376px;">79.00</span>
<span class="t12" style="left:351px;top:376px;">270.00</span>
<span class="t12" style="left:392px;top:376px;">VR1</span>
<span class="cj" style="left:530px;top:376px;"><svg aria-hidden="true" width="49" height="13" viewBox="0 0 49 13" fill="#000"><use href="#g1281ea" x="0"/><use href="#g1252a8" x="12"/><use href="#g129009" x="24"/><use href="#g1262e9" x="36"/></svg><span class="sr">自动选择</span></span>
<span class="cj" style="left:593px;top:376px;"><svg aria-hidden="true" width="13" height="13" viewBox="0 0 13 13" fill="#000"><use href="#g125426" x="0"/></svg><span class="sr">否</span></span>
<span class="cj" style="left:640px;top:376px;"><svg aria-hidden="true" width="13" height="13" viewBox="0 0 13 13" fill="#000"><use href="#g125426" x="0"/></svg><span class="sr">否</span></span>
<span class="cj" style="left:688px;top:376px;"><svg aria-hidden="true" width="13" height="13" viewBox="0 0 13 13" fill="#000"><use href="#g125426" x="0"/></svg><span class="sr">否</span></span>
<span class="cj" style="left:728px;top:376px;"><svg aria-hidden="true" width="13" height="13" viewBox="0 0 13 13" fill="#000"><use href="#g125c42" x="0"/></svg><span class="sr">层</span></span>
<span class="t12" style="left:746px;top:376px;">4</span>
<span class="t12" style="left:75px;top:393px;">17</span>
<span class="t12" style="left:92px;top:393px;">D1</span>
<span class="t12" style="left:211px;top:393px;">185.00</span>
<span class="t12" style="left:292px;top:393px;">87.50</span>
<span class="t12" style="left:351px;top:393px;">180.00</span>
<span class="t12" style="left:392px;top:393px;">SOT23</span>
<span class="cj" style="left:530px;top:393px;"><svg aria-hidden="true" width="49" height="13" viewBox="0 0 49 13" fill="#000"><use href="#g1281ea" x="0"/><use href="#g1252a8" x="12"/><use href="#g129009" x="24"/><use href="#g1262e9" x="36"/></svg><span class="sr">自动选择</span></span>
<span class="cj" style="left:593px;top:393px;"><svg aria-hidden="true" width="13" height="13" viewBox="0 0 13 13" fill="#000"><use href="#g125426" x="0"/></svg><span class="sr">否</span></span>
<span class="cj" style="left:640px;top:393px;"><svg aria-hidden="true" width="13" height="13" viewBox="0 0 13 13" fill="#000"><use href="#g125426" x="0"/></svg><span class="sr">否</span></span>
<span class="cj" style="left:688px;top:393px;"><svg aria-hidden="true" width="13" height="13" viewBox="0 0 13 13" fill="#000"><use href="#g125426" x="0"/></svg><span class="sr">否</span></span>
<span class="cj" style="left:728px;top:393px;"><svg aria-hidden="true" width="13" height="13" viewBox="0 0 13 13" fill="#000"><use href="#g125c42" x="0"/></svg><span class="sr">层</span></span>
<span class="t12" style="left:746px;top:393px;">4</span>
<span class="t12" style="left:75px;top:410px;">18</span>
<span class="t12" style="left:92px;top:410px;">D2</span>
<span class="t12" style="left:211px;top:410px;">180.00</span>
<span class="t12" style="left:292px;top:410px;">87.50</span>
<span class="t12" style="left:357px;top:410px;">90.00</span>
<span class="t12" style="left:392px;top:410px;">SOT23</span>
<span class="cj" style="left:530px;top:410px;"><svg aria-hidden="true" width="49" height="13" viewBox="0 0 49 13" fill="#000"><use href="#g1281ea" x="0"/><use href="#g1252a8" x="12"/><use href="#g129009" x="24"/><use href="#g1262e9" x="36"/></svg><span class="sr">自动选择</span></span>
<span class="cj" style="left:593px;top:410px;"><svg aria-hidden="true" width="13" height="13" viewBox="0 0 13 13" fill="#000"><use href="#g125426" x="0"/></svg><span class="sr">否</span></span>
<span class="cj" style="left:640px;top:410px;"><svg aria-hidden="true" width="13" height="13" viewBox="0 0 13 13" fill="#000"><use href="#g125426" x="0"/></svg><span class="sr">否</span></span>
<span class="cj" style="left:688px;top:410px;"><svg aria-hidden="true" width="13" height="13" viewBox="0 0 13 13" fill="#000"><use href="#g125426" x="0"/></svg><span class="sr">否</span></span>
<span class="cj" style="left:728px;top:410px;"><svg aria-hidden="true" width="13" height="13" viewBox="0 0 13 13" fill="#000"><use href="#g125c42" x="0"/></svg><span class="sr">层</span></span>
<span class="t12" style="left:746px;top:410px;">4</span>
<span class="t12" style="left:75px;top:427px;">19</span>
<span class="t12" style="left:92px;top:427px;">D3</span>
<span class="t12" style="left:211px;top:427px;">175.00</span>
<span class="t12" style="left:292px;top:427px;">87.50</span>
<span class="t12" style="left:363px;top:427px;">0.00</span>
<span class="t12" style="left:392px;top:427px;">SOT23</span>
<span class="cj" style="left:530px;top:427px;"><svg aria-hidden="true" width="49" height="13" viewBox="0 0 49 13" fill="#000"><use href="#g1281ea" x="0"/><use href="#g1252a8" x="12"/><use href="#g129009" x="24"/><use href="#g1262e9" x="36"/></svg><span class="sr">自动选择</span></span>
<span class="cj" style="left:593px;top:427px;"><svg aria-hidden="true" width="13" height="13" viewBox="0 0 13 13" fill="#000"><use href="#g125426" x="0"/></svg><span class="sr">否</span></span>
<span class="cj" style="left:640px;top:427px;"><svg aria-hidden="true" width="13" height="13" viewBox="0 0 13 13" fill="#000"><use href="#g125426" x="0"/></svg><span class="sr">否</span></span>
<span class="cj" style="left:688px;top:427px;"><svg aria-hidden="true" width="13" height="13" viewBox="0 0 13 13" fill="#000"><use href="#g125426" x="0"/></svg><span class="sr">否</span></span>
<span class="cj" style="left:728px;top:427px;"><svg aria-hidden="true" width="13" height="13" viewBox="0 0 13 13" fill="#000"><use href="#g125c42" x="0"/></svg><span class="sr">层</span></span>
<span class="t12" style="left:746px;top:427px;">4</span>
<span class="t12" style="left:75px;top:444px;">20</span>
<span class="t12" style="left:92px;top:444px;">D4</span>
<span class="t12" style="left:211px;top:444px;">170.00</span>
<span class="t12" style="left:292px;top:444px;">87.50</span>
<span class="t12" style="left:351px;top:444px;">270.00</span>
<span class="t12" style="left:392px;top:444px;">SOT23</span>
<span class="cj" style="left:530px;top:444px;"><svg aria-hidden="true" width="49" height="13" viewBox="0 0 49 13" fill="#000"><use href="#g1281ea" x="0"/><use href="#g1252a8" x="12"/><use href="#g129009" x="24"/><use href="#g1262e9" x="36"/></svg><span class="sr">自动选择</span></span>
<span class="cj" style="left:593px;top:444px;"><svg aria-hidden="true" width="13" height="13" viewBox="0 0 13 13" fill="#000"><use href="#g125426" x="0"/></svg><span class="sr">否</span></span>
<span class="cj" style="left:640px;top:444px;"><svg aria-hidden="true" width="13" height="13" viewBox="0 0 13 13" fill="#000"><use href="#g125426" x="0"/></svg><span class="sr">否</span></span>
<span class="cj" style="left:688px;top:444px;"><svg aria-hidden="true" width="13" height="13" viewBox="0 0 13 13" fill="#000"><use href="#g125426" x="0"/></svg><span class="sr">否</span></span>
<span class="cj" style="left:728px;top:444px;"><svg aria-hidden="true" width="13" height="13" viewBox="0 0 13 13" fill="#000"><use href="#g125c42" x="0"/></svg><span class="sr">层</span></span>
<span class="t12" style="left:746px;top:444px;">4</span>
<span class="t12" style="left:75px;top:461px;">21</span>
<span class="t12" style="left:92px;top:461px;">D5</span>
<span class="t12" style="left:211px;top:461px;">165.00</span>
<span class="t12" style="left:292px;top:461px;">87.50</span>
<span class="t12" style="left:351px;top:461px;">180.00</span>
<span class="t12" style="left:392px;top:461px;">SOT23</span>
<span class="cj" style="left:530px;top:461px;"><svg aria-hidden="true" width="49" height="13" viewBox="0 0 49 13" fill="#000"><use href="#g1281ea" x="0"/><use href="#g1252a8" x="12"/><use href="#g129009" x="24"/><use href="#g1262e9" x="36"/></svg><span class="sr">自动选择</span></span>
<span class="cj" style="left:593px;top:461px;"><svg aria-hidden="true" width="13" height="13" viewBox="0 0 13 13" fill="#000"><use href="#g125426" x="0"/></svg><span class="sr">否</span></span>
<span class="cj" style="left:640px;top:461px;"><svg aria-hidden="true" width="13" height="13" viewBox="0 0 13 13" fill="#000"><use href="#g125426" x="0"/></svg><span class="sr">否</span></span>
<span class="cj" style="left:688px;top:461px;"><svg aria-hidden="true" width="13" height="13" viewBox="0 0 13 13" fill="#000"><use href="#g125426" x="0"/></svg><span class="sr">否</span></span>
<span class="cj" style="left:728px;top:461px;"><svg aria-hidden="true" width="13" height="13" viewBox="0 0 13 13" fill="#000"><use href="#g125c42" x="0"/></svg><span class="sr">层</span></span>
<span class="t12" style="left:746px;top:461px;">4</span>
<span class="t12" style="left:75px;top:478px;">22</span>
<span class="t12" style="left:92px;top:478px;">D6</span>
<span class="t12" style="left:211px;top:478px;">160.00</span>
<span class="t12" style="left:292px;top:478px;">87.50</span>
<span class="t12" style="left:357px;top:478px;">90.00</span>
<span class="t12" style="left:392px;top:478px;">SOT23</span>
<span class="cj" style="left:530px;top:478px;"><svg aria-hidden="true" width="49" height="13" viewBox="0 0 49 13" fill="#000"><use href="#g1281ea" x="0"/><use href="#g1252a8" x="12"/><use href="#g129009" x="24"/><use href="#g1262e9" x="36"/></svg><span class="sr">自动选择</span></span>
<span class="cj" style="left:593px;top:478px;"><svg aria-hidden="true" width="13" height="13" viewBox="0 0 13 13" fill="#000"><use href="#g125426" x="0"/></svg><span class="sr">否</span></span>
<span class="cj" style="left:640px;top:478px;"><svg aria-hidden="true" width="13" height="13" viewBox="0 0 13 13" fill="#000"><use href="#g125426" x="0"/></svg><span class="sr">否</span></span>
<span class="cj" style="left:688px;top:478px;"><svg aria-hidden="true" width="13" height="13" viewBox="0 0 13 13" fill="#000"><use href="#g125426" x="0"/></svg><span class="sr">否</span></span>
<span class="cj" style="left:728px;top:478px;"><svg aria-hidden="true" width="13" height="13" viewBox="0 0 13 13" fill="#000"><use href="#g125c42" x="0"/></svg><span class="sr">层</span></span>
<span class="t12" style="left:746px;top:478px;">4</span>
<span class="t12" style="left:75px;top:495px;">23</span>
<span class="t12" style="left:92px;top:495px;">D7</span>
<span class="t12" style="left:211px;top:495px;">155.00</span>
<span class="t12" style="left:292px;top:495px;">87.50</span>
<span class="t12" style="left:363px;top:495px;">0.00</span>
<span class="t12" style="left:392px;top:495px;">SOT23</span>
<span class="cj" style="left:530px;top:495px;"><svg aria-hidden="true" width="49" height="13" viewBox="0 0 49 13" fill="#000"><use href="#g1281ea" x="0"/><use href="#g1252a8" x="12"/><use href="#g129009" x="24"/><use href="#g1262e9" x="36"/></svg><span class="sr">自动选择</span></span>
<span class="cj" style="left:593px;top:495px;"><svg aria-hidden="true" width="13" height="13" viewBox="0 0 13 13" fill="#000"><use href="#g125426" x="0"/></svg><span class="sr">否</span></span>
<span class="cj" style="left:640px;top:495px;"><svg aria-hidden="true" width="13" height="13" viewBox="0 0 13 13" fill="#000"><use href="#g125426" x="0"/></svg><span class="sr">否</span></span>
<span class="cj" style="left:688px;top:495px;"><svg aria-hidden="true" width="13" height="13" viewBox="0 0 13 13" fill="#000"><use href="#g125426" x="0"/></svg><span class="sr">否</span></span>
<span class="cj" style="left:728px;top:495px;"><svg aria-hidden="true" width="13" height="13" viewBox="0 0 13 13" fill="#000"><use href="#g125c42" x="0"/></svg><span class="sr">层</span></span>
<span class="t12" style="left:746px;top:495px;">4</span>
<span class="t12" style="left:75px;top:512px;">24</span>
<span class="t12" style="left:92px;top:512px;">D8</span>
<span class="t12" style="left:211px;top:512px;">150.00</span>
<span class="t12" style="left:292px;top:512px;">87.50</span>
<span class="t12" style="left:351px;top:512px;">270.00</span>
<span class="t12" style="left:392px;top:512px;">SOT23</span>
<span class="cj" style="left:530px;top:512px;"><svg aria-hidden="true" width="49" height="13" viewBox="0 0 49 13" fill="#000"><use href="#g1281ea" x="0"/><use href="#g1252a8" x="12"/><use href="#g129009" x="24"/><use href="#g1262e9" x="36"/></svg><span class="sr">自动选择</span></span>
<span class="cj" style="left:593px;top:512px;"><svg aria-hidden="true" width="13" height="13" viewBox="0 0 13 13" fill="#000"><use href="#g125426" x="0"/></svg><span class="sr">否</span></span>
<span class="cj" style="left:640px;top:512px;"><svg aria-hidden="true" width="13" height="13" viewBox="0 0 13 13" fill="#000"><use href="#g125426" x="0"/></svg><span class="sr">否</span></span>
<span class="cj" style="left:688px;top:512px;"><svg aria-hidden="true" width="13" height="13" viewBox="0 0 13 13" fill="#000"><use href="#g125426" x="0"/></svg><span class="sr">否</span></span>
<span class="cj" style="left:728px;top:512px;"><svg aria-hidden="true" width="13" height="13" viewBox="0 0 13 13" fill="#000"><use href="#g125c42" x="0"/></svg><span class="sr">层</span></span>
<span class="t12" style="left:746px;top:512px;">4</span>
<span class="t12" style="left:75px;top:529px;">25</span>
<span class="t12" style="left:92px;top:529px;">D9</span>
<span class="t12" style="left:211px;top:529px;">145.00</span>
<span class="t12" style="left:292px;top:529px;">87.50</span>
<span class="t12" style="left:351px;top:529px;">315.00</span>
<span class="t12" style="left:392px;top:529px;">SOT23</span>
<span class="cj" style="left:530px;top:529px;"><svg aria-hidden="true" width="49" height="13" viewBox="0 0 49 13" fill="#000"><use href="#g1281ea" x="0"/><use href="#g1252a8" x="12"/><use href="#g129009" x="24"/><use href="#g1262e9" x="36"/></svg><span class="sr">自动选择</span></span>
<span class="cj" style="left:593px;top:529px;"><svg aria-hidden="true" width="13" height="13" viewBox="0 0 13 13" fill="#000"><use href="#g125426" x="0"/></svg><span class="sr">否</span></span>
<span class="cj" style="left:640px;top:529px;"><svg aria-hidden="true" width="13" height="13" viewBox="0 0 13 13" fill="#000"><use href="#g125426" x="0"/></svg><span class="sr">否</span></span>
<span class="cj" style="left:688px;top:529px;"><svg aria-hidden="true" width="13" height="13" viewBox="0 0 13 13" fill="#000"><use href="#g125426" x="0"/></svg><span class="sr">否</span></span>
<span class="cj" style="left:728px;top:529px;"><svg aria-hidden="true" width="13" height="13" viewBox="0 0 13 13" fill="#000"><use href="#g125c42" x="0"/></svg><span class="sr">层</span></span>
<span class="t12" style="left:746px;top:529px;">4</span>
<span class="t12" style="left:75px;top:546px;">26</span>
<span class="t12" style="left:92px;top:546px;">D10</span>
<span class="t12" style="left:211px;top:546px;">140.00</span>
<span class="t12" style="left:292px;top:546px;">87.50</span>
<span class="t12" style="left:357px;top:546px;">45.00</span>
<span class="t12" style="left:392px;top:546px;">SOT23</span>
<span class="cj" style="left:530px;top:546px;"><svg aria-hidden="true" width="49" height="13" viewBox="0 0 49 13" fill="#000"><use href="#g1281ea" x="0"/><use href="#g1252a8" x="12"/><use href="#g129009" x="24"/><use href="#g1262e9" x="36"/></svg><span class="sr">自动选择</span></span>
<span class="cj" style="left:593px;top:546px;"><svg aria-hidden="true" width="13" height="13" viewBox="0 0 13 13" fill="#000"><use href="#g125426" x="0"/></svg><span class="sr">否</span></span>
<span class="cj" style="left:640px;top:546px;"><svg aria-hidden="true" width="13" height="13" viewBox="0 0 13 13" fill="#000"><use href="#g125426" x="0"/></svg><span class="sr">否</span></span>
<span class="cj" style="left:688px;top:546px;"><svg aria-hidden="true" width="13" height="13" viewBox="0 0 13 13" fill="#000"><use href="#g125426" x="0"/></svg><span class="sr">否</span></span>
<span class="cj" style="left:728px;top:546px;"><svg aria-hidden="true" width="13" height="13" viewBox="0 0 13 13" fill="#000"><use href="#g125c42" x="0"/></svg><span class="sr">层</span></span>
<span class="t12" style="left:746px;top:546px;">4</span>
</div>
<div style="left:771px;top:102px;width:15px;height:447px;background:#dfdfdf repeating-conic-gradient(#fff 0 25%,#c0c0c0 0 50%) 0 0/2px 2px"></div>
<div class="sbtn" style="left:771px;top:102px;width:15px;height:16px;"></div>
<svg style="left:775px;top:108px" width="7" height="4" viewBox="0 0 7 4"><path d="M3 0h1v1h1v1h1v1h1v1h-7v-1h1v-1h1v-1h1z" fill="#000"/></svg>
<div class="sbtn" style="left:771px;top:118px;width:15px;height:16px;"></div>
<div class="sbtn" style="left:771px;top:533px;width:15px;height:16px;"></div>
<svg style="left:775px;top:539px" width="7" height="4" viewBox="0 0 7 4"><path d="M0 0h7v1h-1v1h-1v1h-1v1h-1v-1h-1v-1h-1v-1h-1z" fill="#000"/></svg>
<div style="left:30px;top:549px;width:170px;height:22px;box-shadow:inset 1px 1px 0 #fff,inset -1px -1px 0 #808080"></div>
<div style="left:200px;top:550px;width:589px;height:1px;background:#fff"></div>
<div class="nbtn" style="left:40px;top:551px;width:18px;height:19px;"></div>
<div class="nbtn" style="left:58px;top:551px;width:18px;height:19px;"></div>
<div class="nbtn" style="left:108px;top:551px;width:18px;height:19px;"></div>
<div class="nbtn" style="left:126px;top:551px;width:18px;height:19px;"></div>
<div style="left:76px;top:551px;width:32px;height:19px;background:#fff;box-shadow:inset 1px 1px 0 #808080,inset -1px -1px 0 #fff,inset 2px 2px 0 #000"></div>
<span class="t12" style="left:99px;top:554.6px;">1</span>
<span class="t12" style="left:151px;top:556.3px;">/ 317</span>
<svg style="left:0;top:0" width="200" height="600" viewBox="0 0 200 600"><rect x="45.3" y="556" width="1.5" height="10" fill="#fff"/><path d="M54 556l-5 5l5 5z" fill="#fff"/><path d="M71 556l-5 5l5 5z" fill="#fff"/><rect x="44.3" y="555" width="1.5" height="10" fill="#808080"/><path d="M53 555l-5 5l5 5z" fill="#808080"/><path d="M70 555l-5 5l5 5z" fill="#808080"/><path d="M114 555l5 5l-5 5z" fill="#000"/><path d="M130 555l5 5l-5 5z" fill="#000"/><rect x="136" y="555" width="1.5" height="10" fill="#000"/></svg>
<div style="left:3px;top:580px;width:499px;height:18px;box-shadow:inset 1px 1px 0 #808080,inset -1px -1px 0 #fff"></div>
<div style="left:505px;top:580px;width:197px;height:18px;box-shadow:inset 1px 1px 0 #808080,inset -1px -1px 0 #fff"></div>
<div style="left:705px;top:580px;width:91px;height:18px;box-shadow:inset 1px 1px 0 #808080,inset -1px -1px 0 #fff"></div>
<span class="t12" style="left:525px;top:583px;">Y95X12BSX50 HINHO TEST PWB</span>
<span class="cj" style="left:707px;top:582.3px;"><svg aria-hidden="true" width="25" height="13" viewBox="0 0 25 13" fill="#000"><use href="#g124e0b" x="0"/><use href="#g125348" x="12"/></svg><span class="sr">下午</span></span>
<span class="t12" style="left:737px;top:583px;">02:37:05</span>
</div></body></html>
